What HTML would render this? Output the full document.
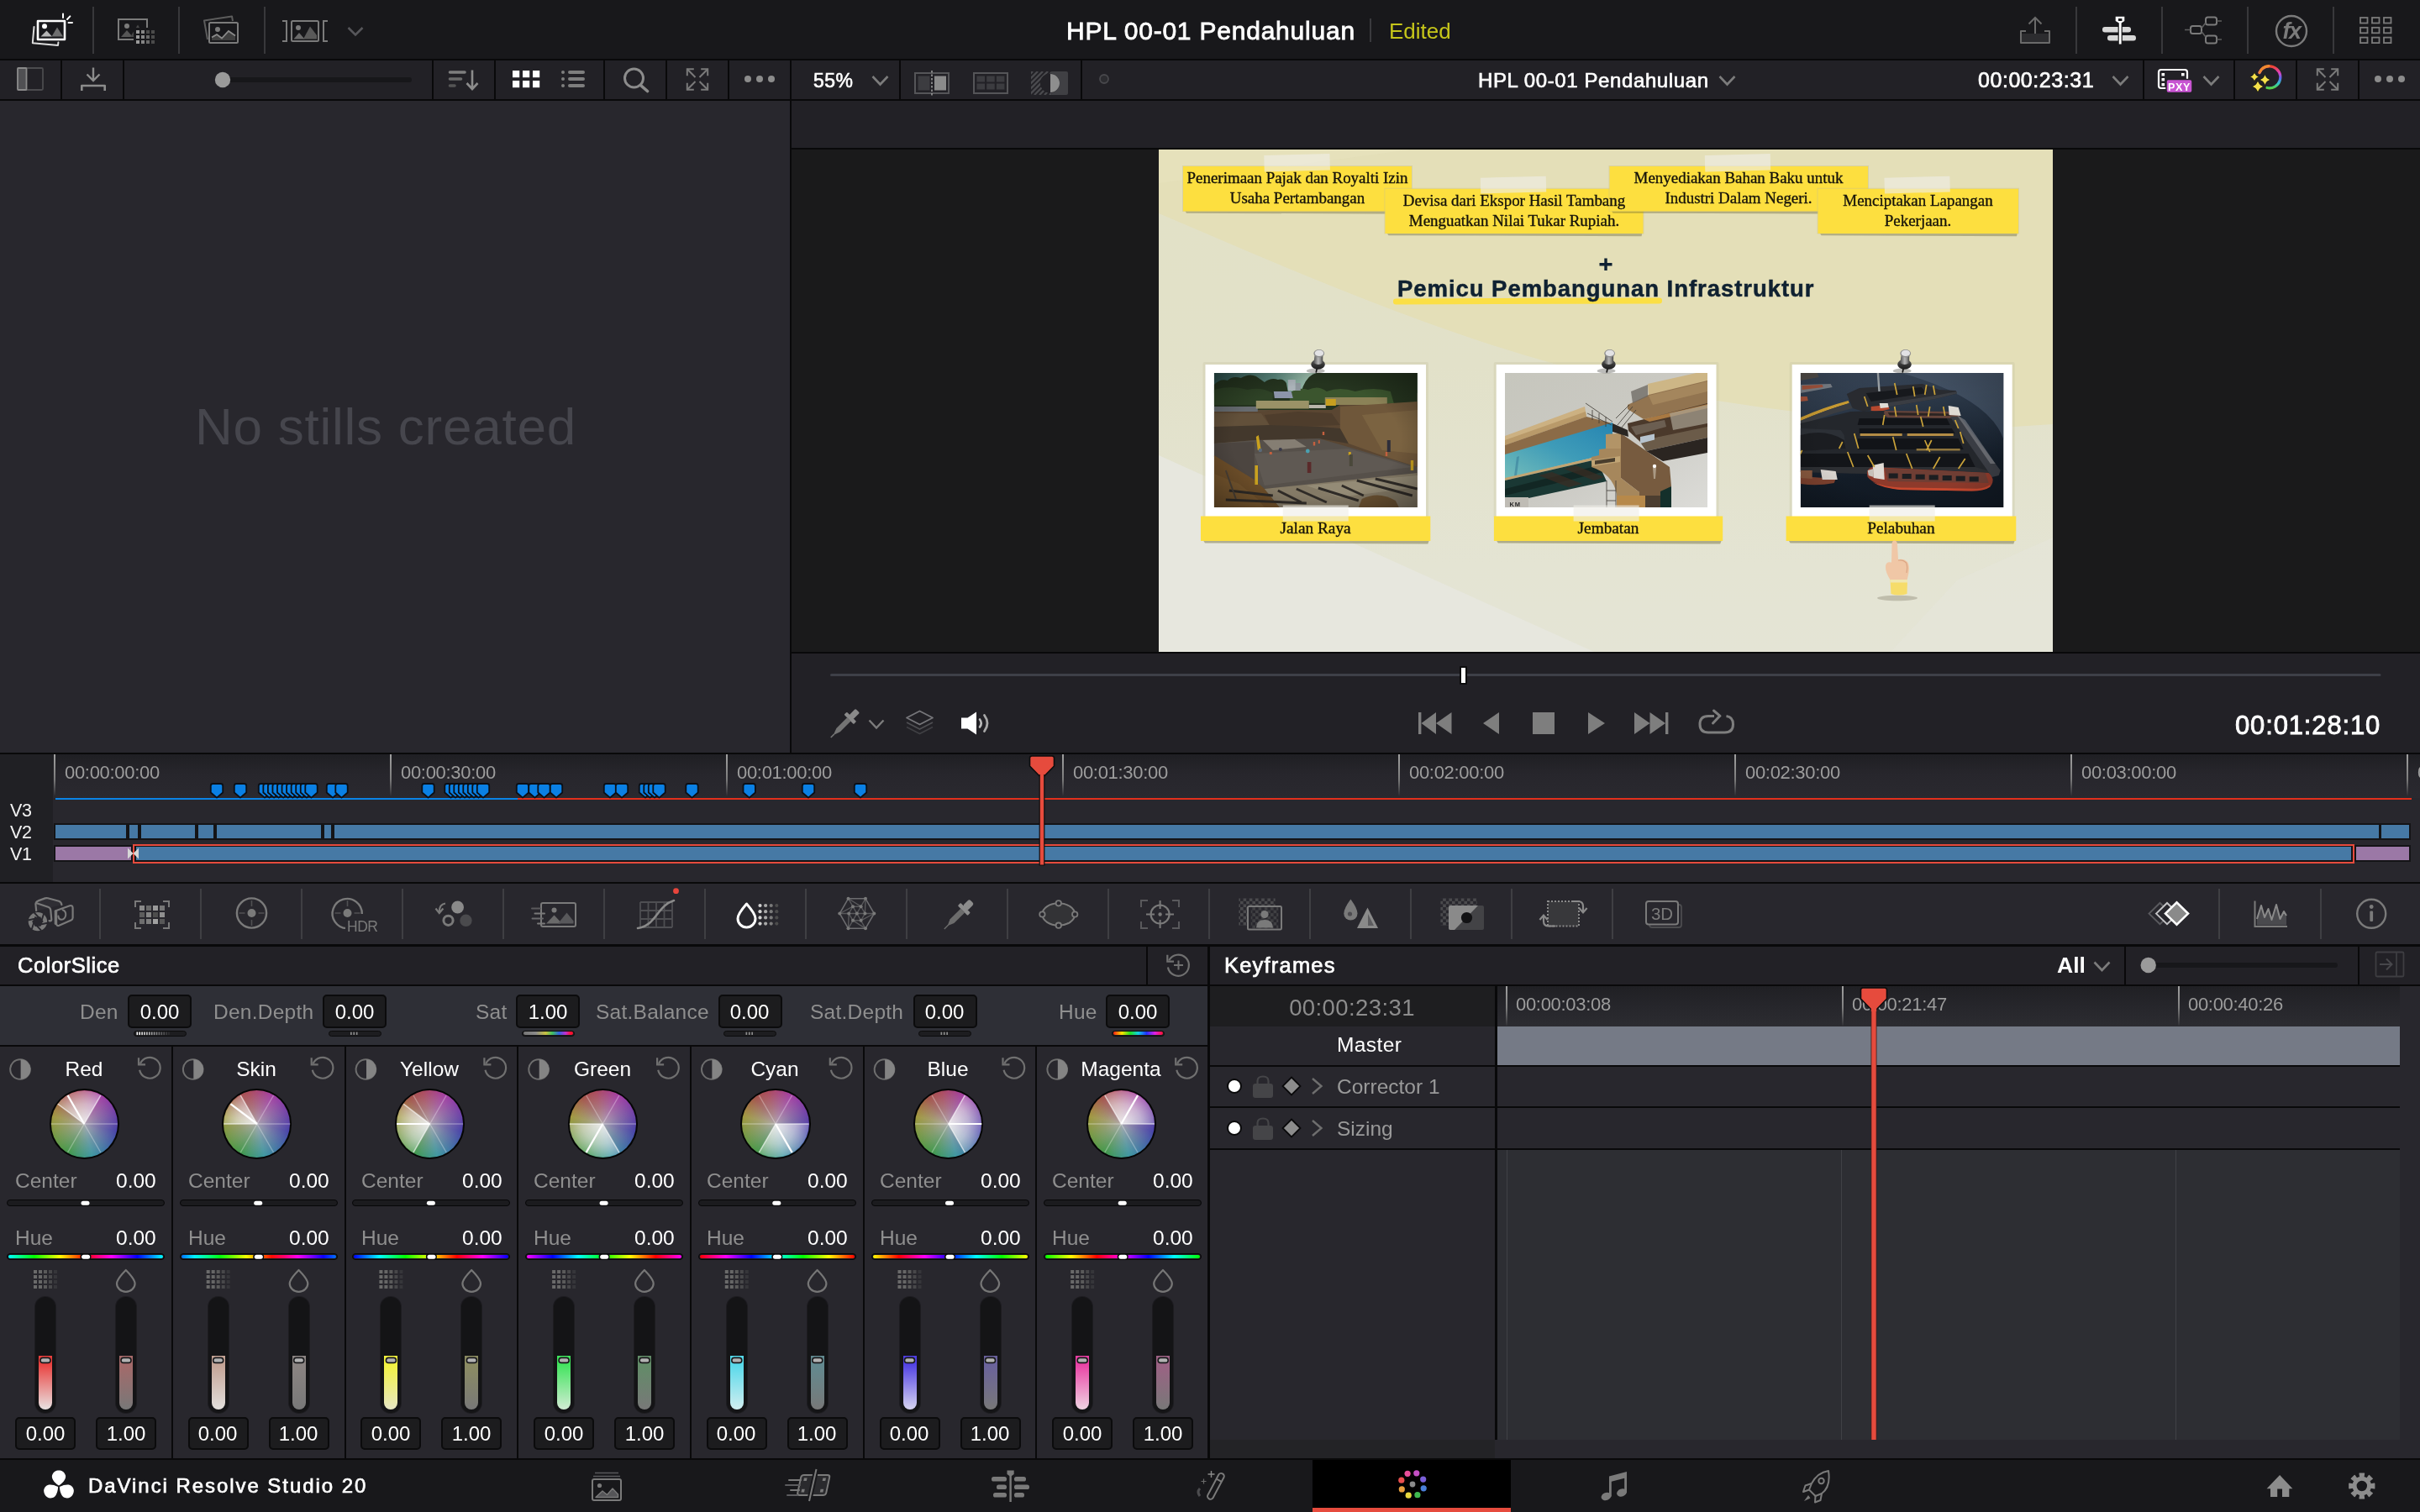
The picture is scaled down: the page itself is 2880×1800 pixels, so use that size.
<!DOCTYPE html>
<html lang="en"><head><meta charset="utf-8"><title>DaVinci Resolve - Color</title>
<style>
html,body{margin:0;padding:0;background:#28272d;}
html{overflow:hidden;width:2880px;height:1800px;}
body{width:2880px;height:1800px;position:relative;overflow:hidden;font-family:"Liberation Sans",sans-serif;}
body div{position:absolute;box-sizing:border-box;}
.t{white-space:nowrap;will-change:transform;}
svg.ov{position:absolute;left:0;top:0;width:2880px;height:1800px;}
</style></head>
<body>
<div style="left:0px;top:0px;width:2880px;height:70px;background:#18181b;"></div>
<div style="left:0px;top:70px;width:2880px;height:2px;background:#09090a;"></div>
<div style="left:110px;top:8px;width:2px;height:56px;background:#38383b;"></div>
<div style="left:212px;top:8px;width:2px;height:56px;background:#38383b;"></div>
<div style="left:314px;top:8px;width:2px;height:56px;background:#38383b;"></div>
<div style="left:2470px;top:8px;width:2px;height:56px;background:#38383b;"></div>
<div style="left:2572px;top:8px;width:2px;height:56px;background:#38383b;"></div>
<div style="left:2674px;top:8px;width:2px;height:56px;background:#38383b;"></div>
<div style="left:2776px;top:8px;width:2px;height:56px;background:#38383b;"></div>
<div class="t" style="top:19.10px;font-size:30px;line-height:36px;color:#fff;-webkit-text-stroke:0.81px #fff;left:1268.6px;letter-spacing:0.78px;">HPL 00-01 Pendahuluan</div>
<div style="left:1630px;top:22px;width:2px;height:28px;background:#3a3a3e;"></div>
<div class="t" style="top:21.99px;font-size:26px;line-height:31px;color:#c5c51a;left:1653px;">Edited</div>
<div style="left:0px;top:72px;width:2880px;height:46px;background:#222126;"></div>
<div style="left:0px;top:118px;width:2880px;height:2px;background:#09090a;"></div>
<div style="left:72px;top:72px;width:2px;height:46px;background:#09090a;"></div>
<div style="left:146px;top:72px;width:2px;height:46px;background:#09090a;"></div>
<div style="left:514px;top:72px;width:2px;height:46px;background:#09090a;"></div>
<div style="left:588px;top:72px;width:2px;height:46px;background:#09090a;"></div>
<div style="left:718px;top:72px;width:2px;height:46px;background:#09090a;"></div>
<div style="left:792px;top:72px;width:2px;height:46px;background:#09090a;"></div>
<div style="left:866px;top:72px;width:2px;height:46px;background:#09090a;"></div>
<div style="left:1070px;top:72px;width:2px;height:46px;background:#09090a;"></div>
<div style="left:1286px;top:72px;width:2px;height:46px;background:#09090a;"></div>
<div style="left:2550px;top:72px;width:2px;height:46px;background:#09090a;"></div>
<div style="left:2658px;top:72px;width:2px;height:46px;background:#09090a;"></div>
<div style="left:2732px;top:72px;width:2px;height:46px;background:#09090a;"></div>
<div style="left:2806px;top:72px;width:2px;height:46px;background:#09090a;"></div>
<div class="t" style="top:81.63px;font-size:23px;line-height:28px;color:#fff;-webkit-text-stroke:0.62px #fff;left:967.6px;letter-spacing:0.5px;">55%</div>
<div class="t" style="top:80.78px;font-size:24px;line-height:29px;color:#fff;-webkit-text-stroke:0.65px #fff;left:1759px;letter-spacing:0.6px;">HPL 00-01 Pendahuluan</div>
<div class="t" style="top:80.14px;font-size:25px;line-height:30px;color:#fff;-webkit-text-stroke:0.68px #fff;left:2353.5px;letter-spacing:0.55px;">00:00:23:31</div>
<div style="left:0px;top:120px;width:940px;height:776px;background:#28272d;"></div>
<div style="left:940px;top:72px;width:2px;height:824px;background:#09090a;"></div>
<div class="t" style="top:471.02px;font-size:62px;line-height:74px;color:#46464d;left:9.0px;width:900px;text-align:center;letter-spacing:0.75px;">No stills created</div>
<div style="left:942px;top:120px;width:1938px;height:56px;background:#222126;"></div>
<div style="left:942px;top:176px;width:1938px;height:2px;background:#09090a;"></div>
<div style="left:942px;top:178px;width:1938px;height:598px;background:#1a1a1b;"></div>
<div style="left:942px;top:776px;width:1938px;height:2px;background:#09090a;"></div>
<div style="left:942px;top:778px;width:1938px;height:118px;background:#222126;"></div>
<div style="left:0px;top:896px;width:2880px;height:2px;background:#09090a;"></div>
<div style="left:1379px;top:178px;width:1064px;height:598px;background:#e4dfb8;"></div>
<div style="left:1658px;top:355.4px;width:319.5px;height:6.6px;background:#fbdf45;border-radius:3.3px;transform:rotate(-0.18deg);"></div>
<div class="t" style="top:326.57px;font-size:27.5px;line-height:33px;color:#0f2131;font-weight:700;left:1662.5px;letter-spacing:0.95px;-webkit-text-stroke:0.5px #0f2131;">Pemicu Pembangunan Infrastruktur</div>
<div class="t" style="top:845.26px;font-size:31px;line-height:37px;color:#fff;-webkit-text-stroke:0.84px #fff;left:2660px;letter-spacing:0.85px;">00:01:28:10</div>
<div style="left:0px;top:898px;width:2880px;height:152px;background:#28272d;"></div>
<div style="left:0px;top:898px;width:63px;height:152px;background:#202024;"></div>
<div style="left:63px;top:898px;width:2817px;height:52px;background:linear-gradient(180deg,#1f1f23 0%,#27262c 45%,#2a292f 100%);"></div>
<div style="left:0px;top:1050px;width:2880px;height:2px;background:#09090a;"></div>
<div style="left:64px;top:898px;width:2px;height:50px;background:linear-gradient(180deg,#a0a0a0 0%,#7c7c7c 60%,rgba(90,90,90,0) 100%);"></div>
<div class="t" style="top:906.98px;font-size:22px;line-height:26px;color:#9c9c9c;left:76.5px;letter-spacing:-0.3px;">00:00:00:00</div>
<div style="left:464px;top:898px;width:2px;height:50px;background:linear-gradient(180deg,#a0a0a0 0%,#7c7c7c 60%,rgba(90,90,90,0) 100%);"></div>
<div class="t" style="top:906.98px;font-size:22px;line-height:26px;color:#9c9c9c;left:476.5px;letter-spacing:-0.3px;">00:00:30:00</div>
<div style="left:864px;top:898px;width:2px;height:50px;background:linear-gradient(180deg,#a0a0a0 0%,#7c7c7c 60%,rgba(90,90,90,0) 100%);"></div>
<div class="t" style="top:906.98px;font-size:22px;line-height:26px;color:#9c9c9c;left:876.5px;letter-spacing:-0.3px;">00:01:00:00</div>
<div style="left:1264px;top:898px;width:2px;height:50px;background:linear-gradient(180deg,#a0a0a0 0%,#7c7c7c 60%,rgba(90,90,90,0) 100%);"></div>
<div class="t" style="top:906.98px;font-size:22px;line-height:26px;color:#9c9c9c;left:1276.5px;letter-spacing:-0.3px;">00:01:30:00</div>
<div style="left:1664px;top:898px;width:2px;height:50px;background:linear-gradient(180deg,#a0a0a0 0%,#7c7c7c 60%,rgba(90,90,90,0) 100%);"></div>
<div class="t" style="top:906.98px;font-size:22px;line-height:26px;color:#9c9c9c;left:1676.5px;letter-spacing:-0.3px;">00:02:00:00</div>
<div style="left:2064px;top:898px;width:2px;height:50px;background:linear-gradient(180deg,#a0a0a0 0%,#7c7c7c 60%,rgba(90,90,90,0) 100%);"></div>
<div class="t" style="top:906.98px;font-size:22px;line-height:26px;color:#9c9c9c;left:2076.5px;letter-spacing:-0.3px;">00:02:30:00</div>
<div style="left:2464px;top:898px;width:2px;height:50px;background:linear-gradient(180deg,#a0a0a0 0%,#7c7c7c 60%,rgba(90,90,90,0) 100%);"></div>
<div class="t" style="top:906.98px;font-size:22px;line-height:26px;color:#9c9c9c;left:2476.5px;letter-spacing:-0.3px;">00:03:00:00</div>
<div style="left:2864px;top:898px;width:2px;height:50px;background:linear-gradient(180deg,#a0a0a0 0%,#7c7c7c 60%,rgba(90,90,90,0) 100%);"></div>
<div class="t" style="top:906.98px;font-size:22px;line-height:26px;color:#9c9c9c;left:2876.5px;letter-spacing:-0.3px;width:3.5px;overflow:hidden;">00:03:30:00</div>
<div style="left:66px;top:950px;width:550px;height:2.4px;background:#0a84e6;"></div>
<div style="left:616px;top:950px;width:2254px;height:2.4px;background:#e2301c;"></div>
<div class="t" style="top:951.55px;font-size:21.5px;line-height:26px;color:#f2f2f2;left:11.5px;letter-spacing:-0.4px;">V3</div>
<div class="t" style="top:977.55px;font-size:21.5px;line-height:26px;color:#f2f2f2;left:11.5px;letter-spacing:-0.4px;">V2</div>
<div class="t" style="top:1003.55px;font-size:21.5px;line-height:26px;color:#f2f2f2;left:11.5px;letter-spacing:-0.4px;">V1</div>
<div style="left:64px;top:980px;width:2805px;height:20px;background:#141416;"></div>
<div style="left:66px;top:982px;width:84px;height:16px;background:#4679a5;"></div>
<div style="left:154px;top:982px;width:10px;height:16px;background:#4679a5;"></div>
<div style="left:168px;top:982px;width:64px;height:16px;background:#4679a5;"></div>
<div style="left:236px;top:982px;width:18px;height:16px;background:#4679a5;"></div>
<div style="left:258px;top:982px;width:124px;height:16px;background:#4679a5;"></div>
<div style="left:386px;top:982px;width:8px;height:16px;background:#4679a5;"></div>
<div style="left:398px;top:982px;width:2432.5px;height:16px;background:#4679a5;"></div>
<div style="left:2834px;top:982px;width:33px;height:16px;background:#4679a5;"></div>
<div style="left:64px;top:1006px;width:2805px;height:20px;background:#141416;"></div>
<div style="left:66px;top:1008px;width:90px;height:16px;background:#9b78a6;"></div>
<div style="left:2804px;top:1008px;width:63px;height:16px;background:#9b78a6;"></div>
<div style="left:158px;top:1004.5px;width:2644px;height:23.5px;background:#141416;border:2.2px solid #e64b3d;"></div>
<div style="left:162px;top:1008px;width:2636px;height:16px;background:#4679a5;"></div>
<div style="left:0px;top:1052px;width:2880px;height:72px;background:#28272d;"></div>
<div style="left:0px;top:1124px;width:2880px;height:3px;background:#09090a;"></div>
<div style="left:118px;top:1058px;width:2px;height:60px;background:#3f3f43;"></div>
<div style="left:238px;top:1058px;width:2px;height:60px;background:#3f3f43;"></div>
<div style="left:358px;top:1058px;width:2px;height:60px;background:#3f3f43;"></div>
<div style="left:478px;top:1058px;width:2px;height:60px;background:#3f3f43;"></div>
<div style="left:598px;top:1058px;width:2px;height:60px;background:#3f3f43;"></div>
<div style="left:718px;top:1058px;width:2px;height:60px;background:#3f3f43;"></div>
<div style="left:838px;top:1058px;width:2px;height:60px;background:#3f3f43;"></div>
<div style="left:958px;top:1058px;width:2px;height:60px;background:#3f3f43;"></div>
<div style="left:1078px;top:1058px;width:2px;height:60px;background:#3f3f43;"></div>
<div style="left:1198px;top:1058px;width:2px;height:60px;background:#3f3f43;"></div>
<div style="left:1318px;top:1058px;width:2px;height:60px;background:#3f3f43;"></div>
<div style="left:1438px;top:1058px;width:2px;height:60px;background:#3f3f43;"></div>
<div style="left:1558px;top:1058px;width:2px;height:60px;background:#3f3f43;"></div>
<div style="left:1678px;top:1058px;width:2px;height:60px;background:#3f3f43;"></div>
<div style="left:1798px;top:1058px;width:2px;height:60px;background:#3f3f43;"></div>
<div style="left:1918px;top:1058px;width:2px;height:60px;background:#3f3f43;"></div>
<div style="left:2640px;top:1058px;width:2px;height:60px;background:#3f3f43;"></div>
<div style="left:2760.5px;top:1058px;width:2px;height:60px;background:#3f3f43;"></div>
<div style="left:0px;top:1127px;width:1437px;height:45px;background:#222126;"></div>
<div style="left:0px;top:1172px;width:1437px;height:2px;background:#09090a;"></div>
<div style="left:0px;top:1174px;width:1437px;height:70px;background:#2e2f36;"></div>
<div style="left:0px;top:1244px;width:1437px;height:2px;background:#09090a;"></div>
<div style="left:0px;top:1246px;width:1437px;height:490px;background:#28272d;"></div>
<div style="left:1437px;top:1127px;width:3px;height:609px;background:#09090a;"></div>
<div style="left:1364px;top:1127px;width:2px;height:45px;background:#09090a;"></div>
<div style="left:0px;top:1736px;width:2880px;height:2px;background:#09090a;"></div>
<div class="t" style="top:1134.46px;font-size:25.5px;line-height:31px;color:#fff;-webkit-text-stroke:0.69px #fff;left:21px;letter-spacing:0.55px;">ColorSlice</div>
<div class="t" style="top:1190.41px;font-size:24.5px;line-height:29px;color:#8f8f8f;right:2739px;text-align:right;letter-spacing:0.25px;">Den</div>
<div style="left:152px;top:1184px;width:76px;height:39.5px;background:#1c1c1e;border:2px solid #0b0b0c;border-radius:5px;"></div>
<div class="t" style="top:1189.57px;font-size:24px;line-height:29px;color:#fff;left:151.5px;width:76px;text-align:center;">0.00</div>
<div style="left:158.5px;top:1226.5px;width:63px;height:7.5px;background:#1d1d20;border:1.6px solid #0b0b0c;border-radius:4px;"></div>
<div class="t" style="top:1190.41px;font-size:24.5px;line-height:29px;color:#8f8f8f;right:2506.5px;text-align:right;letter-spacing:0.25px;">Den.Depth</div>
<div style="left:384px;top:1184px;width:76px;height:39.5px;background:#1c1c1e;border:2px solid #0b0b0c;border-radius:5px;"></div>
<div class="t" style="top:1189.57px;font-size:24px;line-height:29px;color:#fff;left:383.5px;width:76px;text-align:center;">0.00</div>
<div style="left:390.5px;top:1226.5px;width:63px;height:7.5px;background:#1d1d20;border:1.6px solid #0b0b0c;border-radius:4px;"></div>
<div class="t" style="top:1190.41px;font-size:24.5px;line-height:29px;color:#8f8f8f;right:2276px;text-align:right;letter-spacing:0.25px;">Sat</div>
<div style="left:614px;top:1184px;width:76px;height:39.5px;background:#1c1c1e;border:2px solid #0b0b0c;border-radius:5px;"></div>
<div class="t" style="top:1189.57px;font-size:24px;line-height:29px;color:#fff;left:613.5px;width:76px;text-align:center;">1.00</div>
<div style="left:620.5px;top:1226.5px;width:63px;height:7.5px;background:#1d1d20;border:1.6px solid #0b0b0c;border-radius:4px;"></div>
<div style="left:622.5px;top:1228.3px;width:59px;height:4px;background:linear-gradient(90deg,#777 0%,#8a8a8a 25%,#c8c040 45%,#40c060 58%,#3060e0 72%,#c030d0 85%,#ff1030 95%);border-radius:2px;"></div>
<div class="t" style="top:1190.41px;font-size:24.5px;line-height:29px;color:#8f8f8f;right:2036.5px;text-align:right;letter-spacing:0.25px;">Sat.Balance</div>
<div style="left:854.5px;top:1184px;width:76px;height:39.5px;background:#1c1c1e;border:2px solid #0b0b0c;border-radius:5px;"></div>
<div class="t" style="top:1189.57px;font-size:24px;line-height:29px;color:#fff;left:854.0px;width:76px;text-align:center;">0.00</div>
<div style="left:861.0px;top:1226.5px;width:63px;height:7.5px;background:#1d1d20;border:1.6px solid #0b0b0c;border-radius:4px;"></div>
<div class="t" style="top:1190.41px;font-size:24.5px;line-height:29px;color:#8f8f8f;right:1804.5px;text-align:right;letter-spacing:0.25px;">Sat.Depth</div>
<div style="left:1086.5px;top:1184px;width:76px;height:39.5px;background:#1c1c1e;border:2px solid #0b0b0c;border-radius:5px;"></div>
<div class="t" style="top:1189.57px;font-size:24px;line-height:29px;color:#fff;left:1086.0px;width:76px;text-align:center;">0.00</div>
<div style="left:1093.0px;top:1226.5px;width:63px;height:7.5px;background:#1d1d20;border:1.6px solid #0b0b0c;border-radius:4px;"></div>
<div class="t" style="top:1190.41px;font-size:24.5px;line-height:29px;color:#8f8f8f;right:1574.5px;text-align:right;letter-spacing:0.25px;">Hue</div>
<div style="left:1316px;top:1184px;width:76px;height:39.5px;background:#1c1c1e;border:2px solid #0b0b0c;border-radius:5px;"></div>
<div class="t" style="top:1189.57px;font-size:24px;line-height:29px;color:#fff;left:1315.5px;width:76px;text-align:center;">0.00</div>
<div style="left:1322.5px;top:1226.5px;width:63px;height:7.5px;background:#1d1d20;border:1.6px solid #0b0b0c;border-radius:4px;"></div>
<div style="left:1324.5px;top:1228.3px;width:59px;height:4px;background:linear-gradient(90deg,#ff2010 0%,#ffe000 17%,#20e020 34%,#10d0e0 50%,#2030ff 67%,#e020e0 84%,#ff1030 100%);border-radius:2px;"></div>
<div class="t" style="top:1257.61px;font-size:24.5px;line-height:29px;color:#fff;left:9.5px;width:180px;text-align:center;">Red</div>
<div style="left:58.6px;top:1296.4px;width:83.2px;height:83.2px;background:#050505;border-radius:50%;"></div>
<div style="left:60.6px;top:1298.4px;width:79.2px;height:79.2px;background:radial-gradient(circle,rgba(176,172,176,0.92) 0%,rgba(165,162,165,0.55) 35%,rgba(140,140,140,0.14) 75%,rgba(120,120,120,0) 100%),conic-gradient(from 347deg,#b23a50 0deg,#a82aa8 42deg,#3530ae 116deg,#2a98a6 179deg,#2f9a3a 222deg,#a49a2a 296deg,#a8483a 335deg,#b23a50 360deg);border-radius:50%;"></div>
<div class="t" style="top:1391.01px;font-size:24.5px;line-height:29px;color:#8f8f8f;left:18.2px;">Center</div>
<div class="t" style="top:1391.01px;font-size:24.5px;line-height:29px;color:#fff;right:2694.2px;text-align:right;">0.00</div>
<div style="left:8.0px;top:1428px;width:188px;height:8.4px;background:#1b1b1e;border:1.8px solid #060607;border-radius:5px;"></div>
<div class="t" style="top:1459.01px;font-size:24.5px;line-height:29px;color:#8f8f8f;left:18.2px;">Hue</div>
<div class="t" style="top:1459.01px;font-size:24.5px;line-height:29px;color:#fff;right:2694.2px;text-align:right;">0.00</div>
<div style="left:8.0px;top:1492px;width:188px;height:8.4px;background:#1b1b1e;border:1.8px solid #060607;border-radius:5px;"></div>
<div style="left:10.0px;top:1494px;width:184px;height:4.4px;background:linear-gradient(90deg,hsl(180,100%,50%) 0.0%,hsl(150,100%,50%) 8.3%,hsl(120,100%,50%) 16.7%,hsl(90,100%,50%) 25.0%,hsl(60,100%,50%) 33.3%,hsl(30,100%,50%) 41.7%,hsl(0,100%,50%) 50.0%,hsl(330,100%,50%) 58.3%,hsl(300,100%,50%) 66.7%,hsl(270,100%,50%) 75.0%,hsl(240,100%,50%) 83.3%,hsl(210,100%,50%) 91.7%,hsl(180,100%,50%) 100.0%);border-radius:3px;"></div>
<div style="left:42.0px;top:1543.5px;width:24px;height:138px;background:#141416;border-radius:12px;box-shadow:0 0 0 1px rgba(20,20,22,0.55);"></div>
<div style="left:46.0px;top:1614px;width:16px;height:64.4px;background:linear-gradient(180deg,#e93f3d 0%,#e93f3d 14%,#e9e2e2 100%);border-radius:0 0 8px 8px;"></div>
<div style="left:18.0px;top:1686.5px;width:72px;height:39px;background:#1c1c1e;border:2px solid #0b0b0c;border-radius:5px;"></div>
<div class="t" style="top:1691.82px;font-size:24px;line-height:29px;color:#fff;left:17.5px;width:72px;text-align:center;">0.00</div>
<div style="left:138.0px;top:1543.5px;width:24px;height:138px;background:#141416;border-radius:12px;box-shadow:0 0 0 1px rgba(20,20,22,0.55);"></div>
<div style="left:142.0px;top:1614px;width:16px;height:64.4px;background:linear-gradient(180deg,#a56a6a 0%,#a56a6a 14%,#787878 100%);border-radius:0 0 8px 8px;"></div>
<div style="left:114.0px;top:1686.5px;width:72px;height:39px;background:#1c1c1e;border:2px solid #0b0b0c;border-radius:5px;"></div>
<div class="t" style="top:1691.82px;font-size:24px;line-height:29px;color:#fff;left:113.5px;width:72px;text-align:center;">1.00</div>
<div style="left:204px;top:1246px;width:2px;height:490px;background:#09090a;"></div>
<div class="t" style="top:1257.61px;font-size:24.5px;line-height:29px;color:#fff;left:215.2px;width:180px;text-align:center;">Skin</div>
<div style="left:264.3px;top:1296.4px;width:83.2px;height:83.2px;background:#050505;border-radius:50%;"></div>
<div style="left:266.3px;top:1298.4px;width:79.2px;height:79.2px;background:radial-gradient(circle,rgba(176,172,176,0.92) 0%,rgba(165,162,165,0.55) 35%,rgba(140,140,140,0.14) 75%,rgba(120,120,120,0) 100%),conic-gradient(from 347deg,#b23a50 0deg,#a82aa8 42deg,#3530ae 116deg,#2a98a6 179deg,#2f9a3a 222deg,#a49a2a 296deg,#a8483a 335deg,#b23a50 360deg);border-radius:50%;"></div>
<div class="t" style="top:1391.01px;font-size:24.5px;line-height:29px;color:#8f8f8f;left:223.89999999999998px;">Center</div>
<div class="t" style="top:1391.01px;font-size:24.5px;line-height:29px;color:#fff;right:2488.5px;text-align:right;">0.00</div>
<div style="left:213.7px;top:1428px;width:188px;height:8.4px;background:#1b1b1e;border:1.8px solid #060607;border-radius:5px;"></div>
<div class="t" style="top:1459.01px;font-size:24.5px;line-height:29px;color:#8f8f8f;left:223.89999999999998px;">Hue</div>
<div class="t" style="top:1459.01px;font-size:24.5px;line-height:29px;color:#fff;right:2488.5px;text-align:right;">0.00</div>
<div style="left:213.7px;top:1492px;width:188px;height:8.4px;background:#1b1b1e;border:1.8px solid #060607;border-radius:5px;"></div>
<div style="left:215.7px;top:1494px;width:184px;height:4.4px;background:linear-gradient(90deg,hsl(213,100%,50%) 0.0%,hsl(183,100%,50%) 8.3%,hsl(153,100%,50%) 16.7%,hsl(123,100%,50%) 25.0%,hsl(93,100%,50%) 33.3%,hsl(63,100%,50%) 41.7%,hsl(33,100%,50%) 50.0%,hsl(3,100%,50%) 58.3%,hsl(333,100%,50%) 66.7%,hsl(303,100%,50%) 75.0%,hsl(273,100%,50%) 83.3%,hsl(243,100%,50%) 91.7%,hsl(213,100%,50%) 100.0%);border-radius:3px;"></div>
<div style="left:247.7px;top:1543.5px;width:24px;height:138px;background:#141416;border-radius:12px;box-shadow:0 0 0 1px rgba(20,20,22,0.55);"></div>
<div style="left:251.7px;top:1614px;width:16px;height:64.4px;background:linear-gradient(180deg,#c3a294 0%,#c3a294 14%,#e2dfdc 100%);border-radius:0 0 8px 8px;"></div>
<div style="left:223.7px;top:1686.5px;width:72px;height:39px;background:#1c1c1e;border:2px solid #0b0b0c;border-radius:5px;"></div>
<div class="t" style="top:1691.82px;font-size:24px;line-height:29px;color:#fff;left:223.2px;width:72px;text-align:center;">0.00</div>
<div style="left:343.7px;top:1543.5px;width:24px;height:138px;background:#141416;border-radius:12px;box-shadow:0 0 0 1px rgba(20,20,22,0.55);"></div>
<div style="left:347.7px;top:1614px;width:16px;height:64.4px;background:linear-gradient(180deg,#8b8482 0%,#8b8482 14%,#787878 100%);border-radius:0 0 8px 8px;"></div>
<div style="left:319.7px;top:1686.5px;width:72px;height:39px;background:#1c1c1e;border:2px solid #0b0b0c;border-radius:5px;"></div>
<div class="t" style="top:1691.82px;font-size:24px;line-height:29px;color:#fff;left:319.2px;width:72px;text-align:center;">1.00</div>
<div style="left:410px;top:1246px;width:2px;height:490px;background:#09090a;"></div>
<div class="t" style="top:1257.61px;font-size:24.5px;line-height:29px;color:#fff;left:420.9px;width:180px;text-align:center;">Yellow</div>
<div style="left:470.0px;top:1296.4px;width:83.2px;height:83.2px;background:#050505;border-radius:50%;"></div>
<div style="left:472.0px;top:1298.4px;width:79.2px;height:79.2px;background:radial-gradient(circle,rgba(176,172,176,0.92) 0%,rgba(165,162,165,0.55) 35%,rgba(140,140,140,0.14) 75%,rgba(120,120,120,0) 100%),conic-gradient(from 347deg,#b23a50 0deg,#a82aa8 42deg,#3530ae 116deg,#2a98a6 179deg,#2f9a3a 222deg,#a49a2a 296deg,#a8483a 335deg,#b23a50 360deg);border-radius:50%;"></div>
<div class="t" style="top:1391.01px;font-size:24.5px;line-height:29px;color:#8f8f8f;left:429.59999999999997px;">Center</div>
<div class="t" style="top:1391.01px;font-size:24.5px;line-height:29px;color:#fff;right:2282.8px;text-align:right;">0.00</div>
<div style="left:419.4px;top:1428px;width:188px;height:8.4px;background:#1b1b1e;border:1.8px solid #060607;border-radius:5px;"></div>
<div class="t" style="top:1459.01px;font-size:24.5px;line-height:29px;color:#8f8f8f;left:429.59999999999997px;">Hue</div>
<div class="t" style="top:1459.01px;font-size:24.5px;line-height:29px;color:#fff;right:2282.8px;text-align:right;">0.00</div>
<div style="left:419.4px;top:1492px;width:188px;height:8.4px;background:#1b1b1e;border:1.8px solid #060607;border-radius:5px;"></div>
<div style="left:421.4px;top:1494px;width:184px;height:4.4px;background:linear-gradient(90deg,hsl(240,100%,50%) 0.0%,hsl(210,100%,50%) 8.3%,hsl(180,100%,50%) 16.7%,hsl(150,100%,50%) 25.0%,hsl(120,100%,50%) 33.3%,hsl(90,100%,50%) 41.7%,hsl(60,100%,50%) 50.0%,hsl(30,100%,50%) 58.3%,hsl(0,100%,50%) 66.7%,hsl(330,100%,50%) 75.0%,hsl(300,100%,50%) 83.3%,hsl(270,100%,50%) 91.7%,hsl(240,100%,50%) 100.0%);border-radius:3px;"></div>
<div style="left:453.4px;top:1543.5px;width:24px;height:138px;background:#141416;border-radius:12px;box-shadow:0 0 0 1px rgba(20,20,22,0.55);"></div>
<div style="left:457.4px;top:1614px;width:16px;height:64.4px;background:linear-gradient(180deg,#f2f23e 0%,#f2f23e 14%,#e6e6c4 100%);border-radius:0 0 8px 8px;"></div>
<div style="left:429.4px;top:1686.5px;width:72px;height:39px;background:#1c1c1e;border:2px solid #0b0b0c;border-radius:5px;"></div>
<div class="t" style="top:1691.82px;font-size:24px;line-height:29px;color:#fff;left:428.9px;width:72px;text-align:center;">0.00</div>
<div style="left:549.4px;top:1543.5px;width:24px;height:138px;background:#141416;border-radius:12px;box-shadow:0 0 0 1px rgba(20,20,22,0.55);"></div>
<div style="left:553.4px;top:1614px;width:16px;height:64.4px;background:linear-gradient(180deg,#8c8c62 0%,#8c8c62 14%,#787878 100%);border-radius:0 0 8px 8px;"></div>
<div style="left:525.4px;top:1686.5px;width:72px;height:39px;background:#1c1c1e;border:2px solid #0b0b0c;border-radius:5px;"></div>
<div class="t" style="top:1691.82px;font-size:24px;line-height:29px;color:#fff;left:524.9px;width:72px;text-align:center;">1.00</div>
<div style="left:615px;top:1246px;width:2px;height:490px;background:#09090a;"></div>
<div class="t" style="top:1257.61px;font-size:24.5px;line-height:29px;color:#fff;left:626.5999999999999px;width:180px;text-align:center;">Green</div>
<div style="left:675.7px;top:1296.4px;width:83.2px;height:83.2px;background:#050505;border-radius:50%;"></div>
<div style="left:677.7px;top:1298.4px;width:79.2px;height:79.2px;background:radial-gradient(circle,rgba(176,172,176,0.92) 0%,rgba(165,162,165,0.55) 35%,rgba(140,140,140,0.14) 75%,rgba(120,120,120,0) 100%),conic-gradient(from 347deg,#b23a50 0deg,#a82aa8 42deg,#3530ae 116deg,#2a98a6 179deg,#2f9a3a 222deg,#a49a2a 296deg,#a8483a 335deg,#b23a50 360deg);border-radius:50%;"></div>
<div class="t" style="top:1391.01px;font-size:24.5px;line-height:29px;color:#8f8f8f;left:635.3px;">Center</div>
<div class="t" style="top:1391.01px;font-size:24.5px;line-height:29px;color:#fff;right:2077.1000000000004px;text-align:right;">0.00</div>
<div style="left:625.1px;top:1428px;width:188px;height:8.4px;background:#1b1b1e;border:1.8px solid #060607;border-radius:5px;"></div>
<div class="t" style="top:1459.01px;font-size:24.5px;line-height:29px;color:#8f8f8f;left:635.3px;">Hue</div>
<div class="t" style="top:1459.01px;font-size:24.5px;line-height:29px;color:#fff;right:2077.1000000000004px;text-align:right;">0.00</div>
<div style="left:625.1px;top:1492px;width:188px;height:8.4px;background:#1b1b1e;border:1.8px solid #060607;border-radius:5px;"></div>
<div style="left:627.1px;top:1494px;width:184px;height:4.4px;background:linear-gradient(90deg,hsl(300,100%,50%) 0.0%,hsl(270,100%,50%) 8.3%,hsl(240,100%,50%) 16.7%,hsl(210,100%,50%) 25.0%,hsl(180,100%,50%) 33.3%,hsl(150,100%,50%) 41.7%,hsl(120,100%,50%) 50.0%,hsl(90,100%,50%) 58.3%,hsl(60,100%,50%) 66.7%,hsl(30,100%,50%) 75.0%,hsl(0,100%,50%) 83.3%,hsl(330,100%,50%) 91.7%,hsl(300,100%,50%) 100.0%);border-radius:3px;"></div>
<div style="left:659.1px;top:1543.5px;width:24px;height:138px;background:#141416;border-radius:12px;box-shadow:0 0 0 1px rgba(20,20,22,0.55);"></div>
<div style="left:663.1px;top:1614px;width:16px;height:64.4px;background:linear-gradient(180deg,#3fe45c 0%,#3fe45c 14%,#d2ecd4 100%);border-radius:0 0 8px 8px;"></div>
<div style="left:635.1px;top:1686.5px;width:72px;height:39px;background:#1c1c1e;border:2px solid #0b0b0c;border-radius:5px;"></div>
<div class="t" style="top:1691.82px;font-size:24px;line-height:29px;color:#fff;left:634.6px;width:72px;text-align:center;">0.00</div>
<div style="left:755.1px;top:1543.5px;width:24px;height:138px;background:#141416;border-radius:12px;box-shadow:0 0 0 1px rgba(20,20,22,0.55);"></div>
<div style="left:759.1px;top:1614px;width:16px;height:64.4px;background:linear-gradient(180deg,#628c68 0%,#628c68 14%,#787878 100%);border-radius:0 0 8px 8px;"></div>
<div style="left:731.1px;top:1686.5px;width:72px;height:39px;background:#1c1c1e;border:2px solid #0b0b0c;border-radius:5px;"></div>
<div class="t" style="top:1691.82px;font-size:24px;line-height:29px;color:#fff;left:730.6px;width:72px;text-align:center;">1.00</div>
<div style="left:821px;top:1246px;width:2px;height:490px;background:#09090a;"></div>
<div class="t" style="top:1257.61px;font-size:24.5px;line-height:29px;color:#fff;left:832.3px;width:180px;text-align:center;">Cyan</div>
<div style="left:881.4px;top:1296.4px;width:83.2px;height:83.2px;background:#050505;border-radius:50%;"></div>
<div style="left:883.4px;top:1298.4px;width:79.2px;height:79.2px;background:radial-gradient(circle,rgba(176,172,176,0.92) 0%,rgba(165,162,165,0.55) 35%,rgba(140,140,140,0.14) 75%,rgba(120,120,120,0) 100%),conic-gradient(from 347deg,#b23a50 0deg,#a82aa8 42deg,#3530ae 116deg,#2a98a6 179deg,#2f9a3a 222deg,#a49a2a 296deg,#a8483a 335deg,#b23a50 360deg);border-radius:50%;"></div>
<div class="t" style="top:1391.01px;font-size:24.5px;line-height:29px;color:#8f8f8f;left:841.0px;">Center</div>
<div class="t" style="top:1391.01px;font-size:24.5px;line-height:29px;color:#fff;right:1871.4px;text-align:right;">0.00</div>
<div style="left:830.8px;top:1428px;width:188px;height:8.4px;background:#1b1b1e;border:1.8px solid #060607;border-radius:5px;"></div>
<div class="t" style="top:1459.01px;font-size:24.5px;line-height:29px;color:#8f8f8f;left:841.0px;">Hue</div>
<div class="t" style="top:1459.01px;font-size:24.5px;line-height:29px;color:#fff;right:1871.4px;text-align:right;">0.00</div>
<div style="left:830.8px;top:1492px;width:188px;height:8.4px;background:#1b1b1e;border:1.8px solid #060607;border-radius:5px;"></div>
<div style="left:832.8px;top:1494px;width:184px;height:4.4px;background:linear-gradient(90deg,hsl(0,100%,50%) 0.0%,hsl(330,100%,50%) 8.3%,hsl(300,100%,50%) 16.7%,hsl(270,100%,50%) 25.0%,hsl(240,100%,50%) 33.3%,hsl(210,100%,50%) 41.7%,hsl(180,100%,50%) 50.0%,hsl(150,100%,50%) 58.3%,hsl(120,100%,50%) 66.7%,hsl(90,100%,50%) 75.0%,hsl(60,100%,50%) 83.3%,hsl(30,100%,50%) 91.7%,hsl(0,100%,50%) 100.0%);border-radius:3px;"></div>
<div style="left:864.8px;top:1543.5px;width:24px;height:138px;background:#141416;border-radius:12px;box-shadow:0 0 0 1px rgba(20,20,22,0.55);"></div>
<div style="left:868.8px;top:1614px;width:16px;height:64.4px;background:linear-gradient(180deg,#55d9ea 0%,#55d9ea 14%,#d2eef0 100%);border-radius:0 0 8px 8px;"></div>
<div style="left:840.8px;top:1686.5px;width:72px;height:39px;background:#1c1c1e;border:2px solid #0b0b0c;border-radius:5px;"></div>
<div class="t" style="top:1691.82px;font-size:24px;line-height:29px;color:#fff;left:840.3px;width:72px;text-align:center;">0.00</div>
<div style="left:960.8px;top:1543.5px;width:24px;height:138px;background:#141416;border-radius:12px;box-shadow:0 0 0 1px rgba(20,20,22,0.55);"></div>
<div style="left:964.8px;top:1614px;width:16px;height:64.4px;background:linear-gradient(180deg,#628a90 0%,#628a90 14%,#787878 100%);border-radius:0 0 8px 8px;"></div>
<div style="left:936.8px;top:1686.5px;width:72px;height:39px;background:#1c1c1e;border:2px solid #0b0b0c;border-radius:5px;"></div>
<div class="t" style="top:1691.82px;font-size:24px;line-height:29px;color:#fff;left:936.3px;width:72px;text-align:center;">1.00</div>
<div style="left:1027px;top:1246px;width:2px;height:490px;background:#09090a;"></div>
<div class="t" style="top:1257.61px;font-size:24.5px;line-height:29px;color:#fff;left:1038.0px;width:180px;text-align:center;">Blue</div>
<div style="left:1087.1px;top:1296.4px;width:83.2px;height:83.2px;background:#050505;border-radius:50%;"></div>
<div style="left:1089.1px;top:1298.4px;width:79.2px;height:79.2px;background:radial-gradient(circle,rgba(176,172,176,0.92) 0%,rgba(165,162,165,0.55) 35%,rgba(140,140,140,0.14) 75%,rgba(120,120,120,0) 100%),conic-gradient(from 347deg,#b23a50 0deg,#a82aa8 42deg,#3530ae 116deg,#2a98a6 179deg,#2f9a3a 222deg,#a49a2a 296deg,#a8483a 335deg,#b23a50 360deg);border-radius:50%;"></div>
<div class="t" style="top:1391.01px;font-size:24.5px;line-height:29px;color:#8f8f8f;left:1046.7px;">Center</div>
<div class="t" style="top:1391.01px;font-size:24.5px;line-height:29px;color:#fff;right:1665.7px;text-align:right;">0.00</div>
<div style="left:1036.5px;top:1428px;width:188px;height:8.4px;background:#1b1b1e;border:1.8px solid #060607;border-radius:5px;"></div>
<div class="t" style="top:1459.01px;font-size:24.5px;line-height:29px;color:#8f8f8f;left:1046.7px;">Hue</div>
<div class="t" style="top:1459.01px;font-size:24.5px;line-height:29px;color:#fff;right:1665.7px;text-align:right;">0.00</div>
<div style="left:1036.5px;top:1492px;width:188px;height:8.4px;background:#1b1b1e;border:1.8px solid #060607;border-radius:5px;"></div>
<div style="left:1038.5px;top:1494px;width:184px;height:4.4px;background:linear-gradient(90deg,hsl(60,100%,50%) 0.0%,hsl(30,100%,50%) 8.3%,hsl(0,100%,50%) 16.7%,hsl(330,100%,50%) 25.0%,hsl(300,100%,50%) 33.3%,hsl(270,100%,50%) 41.7%,hsl(240,100%,50%) 50.0%,hsl(210,100%,50%) 58.3%,hsl(180,100%,50%) 66.7%,hsl(150,100%,50%) 75.0%,hsl(120,100%,50%) 83.3%,hsl(90,100%,50%) 91.7%,hsl(60,100%,50%) 100.0%);border-radius:3px;"></div>
<div style="left:1070.5px;top:1543.5px;width:24px;height:138px;background:#141416;border-radius:12px;box-shadow:0 0 0 1px rgba(20,20,22,0.55);"></div>
<div style="left:1074.5px;top:1614px;width:16px;height:64.4px;background:linear-gradient(180deg,#4f3fe2 0%,#4f3fe2 14%,#d6d4f0 100%);border-radius:0 0 8px 8px;"></div>
<div style="left:1046.5px;top:1686.5px;width:72px;height:39px;background:#1c1c1e;border:2px solid #0b0b0c;border-radius:5px;"></div>
<div class="t" style="top:1691.82px;font-size:24px;line-height:29px;color:#fff;left:1046.0px;width:72px;text-align:center;">0.00</div>
<div style="left:1166.5px;top:1543.5px;width:24px;height:138px;background:#141416;border-radius:12px;box-shadow:0 0 0 1px rgba(20,20,22,0.55);"></div>
<div style="left:1170.5px;top:1614px;width:16px;height:64.4px;background:linear-gradient(180deg,#6a629c 0%,#6a629c 14%,#787878 100%);border-radius:0 0 8px 8px;"></div>
<div style="left:1142.5px;top:1686.5px;width:72px;height:39px;background:#1c1c1e;border:2px solid #0b0b0c;border-radius:5px;"></div>
<div class="t" style="top:1691.82px;font-size:24px;line-height:29px;color:#fff;left:1142.0px;width:72px;text-align:center;">1.00</div>
<div style="left:1232px;top:1246px;width:2px;height:490px;background:#09090a;"></div>
<div class="t" style="top:1257.61px;font-size:24.5px;line-height:29px;color:#fff;left:1243.6999999999998px;width:180px;text-align:center;">Magenta</div>
<div style="left:1292.8px;top:1296.4px;width:83.2px;height:83.2px;background:#050505;border-radius:50%;"></div>
<div style="left:1294.8px;top:1298.4px;width:79.2px;height:79.2px;background:radial-gradient(circle,rgba(176,172,176,0.92) 0%,rgba(165,162,165,0.55) 35%,rgba(140,140,140,0.14) 75%,rgba(120,120,120,0) 100%),conic-gradient(from 347deg,#b23a50 0deg,#a82aa8 42deg,#3530ae 116deg,#2a98a6 179deg,#2f9a3a 222deg,#a49a2a 296deg,#a8483a 335deg,#b23a50 360deg);border-radius:50%;"></div>
<div class="t" style="top:1391.01px;font-size:24.5px;line-height:29px;color:#8f8f8f;left:1252.3999999999999px;">Center</div>
<div class="t" style="top:1391.01px;font-size:24.5px;line-height:29px;color:#fff;right:1460.0000000000002px;text-align:right;">0.00</div>
<div style="left:1242.2px;top:1428px;width:188px;height:8.4px;background:#1b1b1e;border:1.8px solid #060607;border-radius:5px;"></div>
<div class="t" style="top:1459.01px;font-size:24.5px;line-height:29px;color:#8f8f8f;left:1252.3999999999999px;">Hue</div>
<div class="t" style="top:1459.01px;font-size:24.5px;line-height:29px;color:#fff;right:1460.0000000000002px;text-align:right;">0.00</div>
<div style="left:1242.2px;top:1492px;width:188px;height:8.4px;background:#1b1b1e;border:1.8px solid #060607;border-radius:5px;"></div>
<div style="left:1244.2px;top:1494px;width:184px;height:4.4px;background:linear-gradient(90deg,hsl(120,100%,50%) 0.0%,hsl(90,100%,50%) 8.3%,hsl(60,100%,50%) 16.7%,hsl(30,100%,50%) 25.0%,hsl(0,100%,50%) 33.3%,hsl(330,100%,50%) 41.7%,hsl(300,100%,50%) 50.0%,hsl(270,100%,50%) 58.3%,hsl(240,100%,50%) 66.7%,hsl(210,100%,50%) 75.0%,hsl(180,100%,50%) 83.3%,hsl(150,100%,50%) 91.7%,hsl(120,100%,50%) 100.0%);border-radius:3px;"></div>
<div style="left:1276.2px;top:1543.5px;width:24px;height:138px;background:#141416;border-radius:12px;box-shadow:0 0 0 1px rgba(20,20,22,0.55);"></div>
<div style="left:1280.2px;top:1614px;width:16px;height:64.4px;background:linear-gradient(180deg,#e93fa4 0%,#e93fa4 14%,#f0d4e2 100%);border-radius:0 0 8px 8px;"></div>
<div style="left:1252.2px;top:1686.5px;width:72px;height:39px;background:#1c1c1e;border:2px solid #0b0b0c;border-radius:5px;"></div>
<div class="t" style="top:1691.82px;font-size:24px;line-height:29px;color:#fff;left:1251.7px;width:72px;text-align:center;">0.00</div>
<div style="left:1372.2px;top:1543.5px;width:24px;height:138px;background:#141416;border-radius:12px;box-shadow:0 0 0 1px rgba(20,20,22,0.55);"></div>
<div style="left:1376.2px;top:1614px;width:16px;height:64.4px;background:linear-gradient(180deg,#9c6284 0%,#9c6284 14%,#787878 100%);border-radius:0 0 8px 8px;"></div>
<div style="left:1348.2px;top:1686.5px;width:72px;height:39px;background:#1c1c1e;border:2px solid #0b0b0c;border-radius:5px;"></div>
<div class="t" style="top:1691.82px;font-size:24px;line-height:29px;color:#fff;left:1347.7px;width:72px;text-align:center;">1.00</div>
<div style="left:1440px;top:1127px;width:1440px;height:45px;background:#222126;"></div>
<div style="left:1440px;top:1172px;width:1440px;height:2px;background:#09090a;"></div>
<div class="t" style="top:1134.26px;font-size:25.5px;line-height:31px;color:#fff;-webkit-text-stroke:0.69px #fff;left:1457px;letter-spacing:1.2px;">Keyframes</div>
<div class="t" style="top:1133.02px;font-size:26.5px;line-height:32px;color:#fff;font-weight:700;left:2447.5px;">All</div>
<div style="left:2528px;top:1127px;width:2px;height:45px;background:#09090a;"></div>
<div style="left:2806px;top:1127px;width:2px;height:45px;background:#09090a;"></div>
<div style="left:1440px;top:1174px;width:339px;height:48px;background:#1e1e20;"></div>
<div style="left:1440px;top:1222px;width:339px;height:492px;background:#28272d;"></div>
<div style="left:1440px;top:1714px;width:339px;height:22px;background:#232326;"></div>
<div style="left:1779px;top:1174px;width:3px;height:540px;background:#09090a;"></div>
<div class="t" style="top:1183.17px;font-size:27.5px;line-height:33px;color:#8c8c8c;left:1459.0px;width:300px;text-align:center;letter-spacing:0.4px;">00:00:23:31</div>
<div class="t" style="top:1228.81px;font-size:24.5px;line-height:29px;color:#fff;left:1590.5px;letter-spacing:0.4px;">Master</div>
<div style="left:1440px;top:1268px;width:1416px;height:2px;background:#09090a;"></div>
<div style="left:1440px;top:1317px;width:1416px;height:2px;background:#09090a;"></div>
<div style="left:1440px;top:1367px;width:1416px;height:2px;background:#09090a;"></div>
<div class="t" style="top:1278.81px;font-size:24.5px;line-height:29px;color:#9a9a9a;left:1590.5px;">Corrector 1</div>
<div class="t" style="top:1328.81px;font-size:24.5px;line-height:29px;color:#9a9a9a;left:1590.5px;">Sizing</div>
<div style="left:1782px;top:1174px;width:1074px;height:48px;background:linear-gradient(180deg,#202024 0%,#26262b 50%,#2c2c31 100%);"></div>
<div style="left:2856px;top:1174px;width:24px;height:562px;background:#28272d;"></div>
<div style="left:1782px;top:1222px;width:1074px;height:46px;background:#757a86;"></div>
<div style="left:1782px;top:1270px;width:1074px;height:47px;background:#28272d;"></div>
<div style="left:1782px;top:1319px;width:1074px;height:48px;background:#28272d;"></div>
<div style="left:1782px;top:1369px;width:1074px;height:345px;background:#2d2e33;"></div>
<div style="left:1782px;top:1714px;width:1074px;height:22px;background:#28272d;"></div>
<div style="left:1792px;top:1174px;width:2px;height:47px;background:linear-gradient(180deg,#a0a0a0 0%,#808080 55%,rgba(90,90,90,0.1) 100%);"></div>
<div class="t" style="top:1182.58px;font-size:22px;line-height:26px;color:#9c9c9c;left:1804px;letter-spacing:-0.3px;">00:00:03:08</div>
<div style="left:2192px;top:1174px;width:2px;height:47px;background:linear-gradient(180deg,#a0a0a0 0%,#808080 55%,rgba(90,90,90,0.1) 100%);"></div>
<div class="t" style="top:1182.58px;font-size:22px;line-height:26px;color:#9c9c9c;left:2204px;letter-spacing:-0.3px;">00:00:21:47</div>
<div style="left:2592px;top:1174px;width:2px;height:47px;background:linear-gradient(180deg,#a0a0a0 0%,#808080 55%,rgba(90,90,90,0.1) 100%);"></div>
<div class="t" style="top:1182.58px;font-size:22px;line-height:26px;color:#9c9c9c;left:2604px;letter-spacing:-0.3px;">00:00:40:26</div>
<div style="left:1792.5px;top:1369px;width:1.4px;height:345px;background:#404146;"></div>
<div style="left:2190.5px;top:1369px;width:1.4px;height:345px;background:#404146;"></div>
<div style="left:2588.5px;top:1369px;width:1.4px;height:345px;background:#404146;"></div>
<div style="left:0px;top:1738px;width:2880px;height:62px;background:#18181b;"></div>
<div class="t" style="top:1754.38px;font-size:24px;line-height:29px;color:#fff;-webkit-text-stroke:0.65px #fff;left:104.8px;letter-spacing:1.94px;">DaVinci Resolve Studio 20</div>
<div style="left:1562px;top:1738px;width:236px;height:62px;background:#000;"></div>
<div style="left:1562px;top:1795px;width:236px;height:5px;background:#e64b3d;"></div>
<svg class="ov" viewBox="0 0 2880 1800" width="2880" height="1800"><defs><clipPath id="hlc"><rect x="1227" y="85" width="24" height="28"/></clipPath><linearGradient id="rb" x1="0" y1="0" x2="0" y2="1"><stop offset="0" stop-color="#f0452f"/><stop offset="0.3" stop-color="#e040c0"/><stop offset="0.55" stop-color="#5a6cf0"/><stop offset="0.8" stop-color="#30c8c0"/><stop offset="1" stop-color="#58d048"/></linearGradient><linearGradient id="band2" gradientUnits="userSpaceOnUse" x1="0" y1="254" x2="0" y2="776"><stop offset="0" stop-color="#e2e1c7"/><stop offset="0.35" stop-color="#e2e1c9"/><stop offset="0.8" stop-color="#e4e4d3"/><stop offset="1" stop-color="#e4e4d5"/></linearGradient><linearGradient id="pinb" x1="0" y1="0" x2="0" y2="1"><stop offset="0" stop-color="#6a6a6a"/><stop offset="0.45" stop-color="#3a3a3a"/><stop offset="1" stop-color="#1c1c1c"/></linearGradient><linearGradient id="pinn" x1="0" y1="0" x2="1" y2="0"><stop offset="0" stop-color="#4e4e4e"/><stop offset="0.5" stop-color="#b4b4b4"/><stop offset="0.75" stop-color="#8a8a8a"/><stop offset="1" stop-color="#444"/></linearGradient><linearGradient id="sky1" x1="0" y1="0" x2="1" y2="0"><stop offset="0" stop-color="#2f5552"/><stop offset="0.3" stop-color="#5d8a80"/><stop offset="0.48" stop-color="#9dbcaa"/><stop offset="0.7" stop-color="#6f968a"/><stop offset="1" stop-color="#3c5c54"/></linearGradient><radialGradient id="vig" cx="0.5" cy="0.5" r="0.75"><stop offset="0.55" stop-color="#000" stop-opacity="0"/><stop offset="1" stop-color="#000" stop-opacity="0.42"/></radialGradient><linearGradient id="gird" x1="1" y1="0" x2="0" y2="1"><stop offset="0" stop-color="#2685b2"/><stop offset="0.5" stop-color="#3f9cb8"/><stop offset="1" stop-color="#74bdba"/></linearGradient><linearGradient id="sky2" x1="0" y1="0" x2="1" y2="1"><stop offset="0" stop-color="#c6c6bd"/><stop offset="0.55" stop-color="#cbcac4"/><stop offset="1" stop-color="#dcdcd8"/></linearGradient><linearGradient id="sea3" x1="0" y1="0" x2="0.2" y2="1"><stop offset="0" stop-color="#3c4a5d"/><stop offset="0.4" stop-color="#263241"/><stop offset="0.8" stop-color="#131c27"/><stop offset="1" stop-color="#111923"/></linearGradient><pattern id="chk" width="7.2" height="7.2" patternUnits="userSpaceOnUse"><rect width="3.6" height="3.6" fill="#4a4a4d"/><rect x="3.6" y="3.6" width="3.6" height="3.6" fill="#4a4a4d"/></pattern><pattern id="chk2" width="7.2" height="7.2" patternUnits="userSpaceOnUse"><rect width="3.6" height="3.6" fill="#404043"/><rect x="3.6" y="3.6" width="3.6" height="3.6" fill="#404043"/></pattern><clipPath id="wc0"><circle cx="100.2" cy="1338" r="39.6"/></clipPath><radialGradient id="wg0" gradientUnits="userSpaceOnUse" cx="100.2" cy="1338" r="39.6"><stop offset="0" stop-color="#fff" stop-opacity="0.75"/><stop offset="0.6" stop-color="#fff" stop-opacity="0.5"/><stop offset="1" stop-color="#fff" stop-opacity="0.22"/></radialGradient><clipPath id="wc1"><circle cx="305.9" cy="1338" r="39.6"/></clipPath><radialGradient id="wg1" gradientUnits="userSpaceOnUse" cx="305.9" cy="1338" r="39.6"><stop offset="0" stop-color="#fff" stop-opacity="0.75"/><stop offset="0.6" stop-color="#fff" stop-opacity="0.5"/><stop offset="1" stop-color="#fff" stop-opacity="0.22"/></radialGradient><clipPath id="wc2"><circle cx="511.6" cy="1338" r="39.6"/></clipPath><radialGradient id="wg2" gradientUnits="userSpaceOnUse" cx="511.6" cy="1338" r="39.6"><stop offset="0" stop-color="#fff" stop-opacity="0.75"/><stop offset="0.6" stop-color="#fff" stop-opacity="0.5"/><stop offset="1" stop-color="#fff" stop-opacity="0.22"/></radialGradient><clipPath id="wc3"><circle cx="717.3" cy="1338" r="39.6"/></clipPath><radialGradient id="wg3" gradientUnits="userSpaceOnUse" cx="717.3" cy="1338" r="39.6"><stop offset="0" stop-color="#fff" stop-opacity="0.75"/><stop offset="0.6" stop-color="#fff" stop-opacity="0.5"/><stop offset="1" stop-color="#fff" stop-opacity="0.22"/></radialGradient><clipPath id="wc4"><circle cx="923.0" cy="1338" r="39.6"/></clipPath><radialGradient id="wg4" gradientUnits="userSpaceOnUse" cx="923.0" cy="1338" r="39.6"><stop offset="0" stop-color="#fff" stop-opacity="0.75"/><stop offset="0.6" stop-color="#fff" stop-opacity="0.5"/><stop offset="1" stop-color="#fff" stop-opacity="0.22"/></radialGradient><clipPath id="wc5"><circle cx="1128.7" cy="1338" r="39.6"/></clipPath><radialGradient id="wg5" gradientUnits="userSpaceOnUse" cx="1128.7" cy="1338" r="39.6"><stop offset="0" stop-color="#fff" stop-opacity="0.75"/><stop offset="0.6" stop-color="#fff" stop-opacity="0.5"/><stop offset="1" stop-color="#fff" stop-opacity="0.22"/></radialGradient><clipPath id="wc6"><circle cx="1334.4" cy="1338" r="39.6"/></clipPath><radialGradient id="wg6" gradientUnits="userSpaceOnUse" cx="1334.4" cy="1338" r="39.6"><stop offset="0" stop-color="#fff" stop-opacity="0.75"/><stop offset="0.6" stop-color="#fff" stop-opacity="0.5"/><stop offset="1" stop-color="#fff" stop-opacity="0.22"/></radialGradient></defs>
<g fill="none" stroke-linejoin="round" stroke-linecap="round"><path d="M40.5,32 L38.8,51.2 L69,54 L69.4,50.5" stroke="#dcdcdc" stroke-width="2"/><rect x="45" y="25" width="32" height="22" stroke="#fff" stroke-width="2.6" fill="#18181b"/><path d="M75,16.5 V21 M80,23 L83.4,19.4 M81.5,27 H86" stroke="#fff" stroke-width="2"/></g><circle cx="53" cy="31.2" r="3" fill="#fff"/><path d="M48.5,43.5 L55.5,36.5 L62,43.5 Z" fill="#b4b4b4"/><path d="M61.5,43.5 L68,32.5 L75,43.5 Z" fill="#6e6e6e"/>
<rect x="141" y="23" width="34" height="24" fill="none" stroke="#7b7b7b" stroke-width="2"/><circle cx="151" cy="31" r="3" fill="#7b7b7b"/><path d="M144,44 L151,36 L158,44 Z" fill="#565656"/><path d="M155,44 L164,29.5 L172.5,44 Z" fill="#484848"/><rect x="159" y="33" width="26" height="21" fill="#18181b"/>
<rect x="162" y="36" width="4" height="4" fill="#9a9a9a"/>
<rect x="168" y="36" width="4" height="4" fill="#858585"/>
<rect x="174" y="36" width="4" height="4" fill="#4a4a4a"/>
<rect x="180" y="36" width="4" height="4" fill="#4a4a4a"/>
<rect x="162" y="42" width="4" height="4" fill="#9a9a9a"/>
<rect x="168" y="42" width="4" height="4" fill="#858585"/>
<rect x="174" y="42" width="4" height="4" fill="#686868"/>
<rect x="180" y="42" width="4" height="4" fill="#4a4a4a"/>
<rect x="162" y="48" width="4" height="4" fill="#9a9a9a"/>
<rect x="168" y="48" width="4" height="4" fill="#858585"/>
<rect x="174" y="48" width="4" height="4" fill="#686868"/>
<rect x="180" y="48" width="4" height="4" fill="#4a4a4a"/>
<path d="M247,47 L243,24.5 L276,19.5 L277,25" fill="none" stroke="#5c5c5c" stroke-width="2" stroke-linejoin="round"/><rect x="249" y="27" width="34" height="24" rx="1.5" fill="#18181b" stroke="#7b7b7b" stroke-width="2"/><circle cx="259" cy="35" r="3" fill="#7b7b7b"/><path d="M252,48 V44.5 L258,41 L264,45.5 L272,37 L280,42.5 V48 Z" fill="#3f3f3f"/><path d="M252,44.5 L258,41 L264,45.5 L272,37 L280,42.5" fill="none" stroke="#8a8a8a" stroke-width="1.8"/>
<g fill="none" stroke="#7b7b7b" stroke-width="2"><path d="M336,25 H341 V49 H336"/><path d="M390,25 H385 V49 H390"/><rect x="347" y="25" width="32" height="24" rx="1.5"/></g><circle cx="355" cy="33" r="3" fill="#7b7b7b"/><path d="M349.5,46.5 L356,39 L362.5,46.5 Z" fill="#6a6a6a"/><path d="M361,46.5 L369,31.5 L377,42 V46.5 Z" fill="#595959"/><path d="M414.5,33 L423,41.5 L431.5,33" fill="none" stroke="#56565a" stroke-width="2.6"/>
<path d="M2411,37 H2405 V51 H2439 V37 H2433" fill="none" stroke="#6a6a6a" stroke-width="2" stroke-linejoin="round"/><rect x="2406" y="40" width="32" height="10" fill="#2c2c2f"/><path d="M2422,22 V40 M2414.5,28.5 L2422,21 L2429.5,28.5" fill="none" stroke="#6a6a6a" stroke-width="2"/>
<rect x="2502" y="32" width="34" height="6.5" rx="3" fill="#d8d8d8"/><rect x="2508" y="42" width="34" height="6.5" rx="3" fill="#d8d8d8"/><rect x="2520.6" y="24" width="5.2" height="29" fill="#18181b"/><rect x="2521.8" y="22" width="2.8" height="30.5" fill="#fff"/><path d="M2517.7,19.8 H2528.3 V25 L2523.2,28.2 L2517.7,25 Z" fill="#fff"/><rect x="2521" y="22" width="4.4" height="3" fill="#18181b"/>
<g fill="none" stroke="#7b7b7b" stroke-width="2"><rect x="2607" y="31" width="13" height="9" rx="2.5"/><rect x="2625" y="20.5" width="13" height="9" rx="2.5"/><rect x="2625" y="42.5" width="13" height="9" rx="2.5"/></g><path d="M2600,35.5 H2607 M2638,25 H2644 M2638,47 H2644 M2620,33.5 L2625,27 M2620,37.5 L2625,44" stroke="#5e5e5e" stroke-width="1.6" fill="none"/>
<circle cx="2727" cy="37" r="18" fill="none" stroke="#7b7b7b" stroke-width="2.4"/><text x="2727" y="46" text-anchor="middle" font-family="Liberation Sans, sans-serif" font-style="italic" font-weight="700" font-size="27" letter-spacing="-1.5" fill="#7b7b7b">fx</text>
<rect x="2809" y="21.0" width="8.5" height="6.5" fill="none" stroke="#7b7b7b" stroke-width="1.8"/>
<rect x="2823" y="21.0" width="8.5" height="6.5" fill="none" stroke="#7b7b7b" stroke-width="1.8"/>
<rect x="2837" y="21.0" width="8.5" height="6.5" fill="none" stroke="#7b7b7b" stroke-width="1.8"/>
<rect x="2809" y="32.8" width="8.5" height="6.5" fill="none" stroke="#7b7b7b" stroke-width="1.8"/>
<rect x="2823" y="32.8" width="8.5" height="6.5" fill="none" stroke="#7b7b7b" stroke-width="1.8"/>
<rect x="2837" y="32.8" width="8.5" height="6.5" fill="none" stroke="#7b7b7b" stroke-width="1.8"/>
<rect x="2809" y="44.6" width="8.5" height="6.5" fill="none" stroke="#7b7b7b" stroke-width="1.8"/>
<rect x="2823" y="44.6" width="8.5" height="6.5" fill="none" stroke="#7b7b7b" stroke-width="1.8"/>
<rect x="2837" y="44.6" width="8.5" height="6.5" fill="none" stroke="#7b7b7b" stroke-width="1.8"/>
<rect x="21" y="81" width="30" height="26" rx="1.5" fill="none" stroke="#4b4b4e" stroke-width="1.8"/><rect x="21" y="81" width="10.5" height="26" rx="1" fill="#505053" stroke="#8a8a8a" stroke-width="1.8"/>
<path d="M111,80.5 V95 M103.5,88.5 L111,96 L118.5,88.5" fill="none" stroke="#8c8c8c" stroke-width="2.4"/><path d="M97.3,108 V102 H124.7 V108" fill="none" stroke="#8c8c8c" stroke-width="2.6" stroke-linejoin="round"/>
<rect x="270" y="92" width="220" height="6" rx="3" fill="#17171a"/><circle cx="265" cy="95" r="9.2" fill="#9a9a9a"/>
<g stroke-linecap="round" fill="none"><path d="M535.5,86 H553" stroke="#7e7e7e" stroke-width="3.6"/><path d="M535.5,94 H548.5" stroke="#6a6a6a" stroke-width="3.6"/><path d="M535.5,102 H541" stroke="#555" stroke-width="3.6"/><path d="M562,83.5 V105 M555.5,99 L562,106 L568.5,99" stroke="#8c8c8c" stroke-width="2.6" stroke-linecap="butt"/></g>
<rect x="610" y="84" width="8.2" height="8.2" fill="#fff"/>
<rect x="622" y="84" width="8.2" height="8.2" fill="#fff"/>
<rect x="634" y="84" width="8.2" height="8.2" fill="#fff"/>
<rect x="610" y="96" width="8.2" height="8.2" fill="#fff"/>
<rect x="622" y="96" width="8.2" height="8.2" fill="#fff"/>
<rect x="634" y="96" width="8.2" height="8.2" fill="#fff"/>
<circle cx="670" cy="86" r="2" fill="#7e7e7e"/><rect x="676" y="84" width="20" height="4" rx="2" fill="#7e7e7e"/>
<circle cx="670" cy="94" r="2" fill="#7e7e7e"/><rect x="676" y="92" width="20" height="4" rx="2" fill="#7e7e7e"/>
<circle cx="670" cy="102" r="2" fill="#7e7e7e"/><rect x="676" y="100" width="20" height="4" rx="2" fill="#7e7e7e"/>
<circle cx="754.5" cy="93" r="11" fill="none" stroke="#8c8c8c" stroke-width="3"/><path d="M762.5,101.5 L770.5,108.5" stroke="#8c8c8c" stroke-width="3.6" stroke-linecap="round"/>
<g stroke="#7a7a7a" stroke-width="2" fill="none"><path d="M827.5,92.0 L817.8,82.3"/><path d="M825.8,82.3 H817.8 V90.3" stroke-linejoin="miter"/><path d="M832.5,92.0 L842.2,82.3"/><path d="M834.2,82.3 H842.2 V90.3" stroke-linejoin="miter"/><path d="M827.5,97.0 L817.8,106.7"/><path d="M825.8,106.7 H817.8 V98.7" stroke-linejoin="miter"/><path d="M832.5,97.0 L842.2,106.7"/><path d="M834.2,106.7 H842.2 V98.7" stroke-linejoin="miter"/></g>
<circle cx="890" cy="94" r="4" fill="#8c8c8c"/>
<circle cx="904" cy="94" r="4" fill="#8c8c8c"/>
<circle cx="918" cy="94" r="4" fill="#8c8c8c"/>
<path d="M1038.5,91 L1047.5,100.5 L1056.5,91" fill="none" stroke="#7c7c7c" stroke-width="2.6"/>
<rect x="1089" y="87" width="40" height="24" fill="none" stroke="#555558" stroke-width="2"/><rect x="1092.5" y="90.5" width="14" height="17" fill="#3c3c40"/><rect x="1112" y="90.5" width="14" height="17" fill="#8a8a8a"/><path d="M1109,84 V114" stroke="#9a9a9a" stroke-width="1.6" stroke-dasharray="2.5,2"/>
<rect x="1159" y="87" width="40" height="24" fill="none" stroke="#555558" stroke-width="2"/>
<rect x="1162.5" y="90.5" width="9.5" height="7" fill="#3c3c40"/>
<rect x="1174.2" y="90.5" width="9.5" height="7" fill="#3c3c40"/>
<rect x="1185.9" y="90.5" width="9.5" height="7" fill="#3c3c40"/>
<rect x="1162.5" y="99.5" width="9.5" height="7" fill="#3c3c40"/>
<rect x="1174.2" y="99.5" width="9.5" height="7" fill="#3c3c40"/>
<rect x="1185.9" y="99.5" width="9.5" height="7" fill="#3c3c40"/>
<rect x="1250" y="85" width="21" height="28" rx="2" fill="#404044"/><path d="M1201,113 L1229,85 M1207,113 L1235,85 M1213,113 L1241,85 M1219,113 L1247,85 M1225,113 L1253,85 M1231,113 L1259,85 M1237,113 L1265,85 M1243,113 L1271,85 M1249,113 L1277,85 " stroke="#4a4a4e" stroke-width="2.4" clip-path="url(#hlc)"/><circle cx="1249.5" cy="99" r="11.5" fill="#222126"/><path d="M1250,88 A11,11 0 0 1 1250,110 Z" fill="#8e8e8e"/>
<circle cx="1314" cy="94" r="5" fill="#2c2c30" stroke="#48484c" stroke-width="1.8"/>
<path d="M2046.5,91 L2055.5,100.5 L2064.5,91" fill="none" stroke="#7c7c7c" stroke-width="2.6"/>
<path d="M2514.5,91 L2523.5,100.5 L2532.5,91" fill="none" stroke="#7c7c7c" stroke-width="2.6"/>
<rect x="2569" y="83" width="34" height="22" rx="3" fill="none" stroke="#fff" stroke-width="2.2"/><path d="M2578,83 V105" stroke="#fff" stroke-width="0"/><rect x="2572.5" y="87" width="3.6" height="3.4" fill="#fff"/><rect x="2572.5" y="93" width="3.6" height="3.4" fill="#fff"/><rect x="2572.5" y="99" width="3.6" height="3.4" fill="#fff"/><rect x="2596" y="87" width="3.6" height="3.4" fill="#fff"/><rect x="2578" y="94.5" width="31" height="16" rx="2.5" fill="#c855d2" stroke="#222126" stroke-width="1.5"/><text x="2593.5" y="107.5" text-anchor="middle" font-family="Liberation Sans, sans-serif" font-weight="700" font-size="12.5" letter-spacing="0.6" fill="#fff">PXY</text>
<path d="M2622.5,91 L2631.5,100.5 L2640.5,91" fill="none" stroke="#7c7c7c" stroke-width="2.6"/>
<path d="M2689,86.5 A13,13 0 1 1 2698,104.5" fill="none" stroke="url(#rb)" stroke-width="3.2" stroke-linecap="round"/><path d="M2689,86.5 A13,13 0 0 1 2700,78.6" fill="none" stroke="#f08a30" stroke-width="3.2" stroke-linecap="round"/>
<path d="M2683,86.0 Q2684.21,90.29 2688.5,91.5 Q2684.21,92.71 2683,97.0 Q2681.79,92.71 2677.5,91.5 Q2681.79,90.29 2683,86.0 Z" fill="#f5e04a" stroke="#1a1a12" stroke-width="0.8"/><path d="M2695.5,88.5 Q2696.93,93.57 2702.0,95 Q2696.93,96.43 2695.5,101.5 Q2694.07,96.43 2689.0,95 Q2694.07,93.57 2695.5,88.5 Z" fill="#f5e04a" stroke="#1a1a12" stroke-width="0.8"/><path d="M2687,96 Q2688.54,101.46 2694,103 Q2688.54,104.54 2687,110 Q2685.46,104.54 2680,103 Q2685.46,101.46 2687,96 Z" fill="#f5e04a" stroke="#1a1a12" stroke-width="0.8"/>
<g stroke="#7a7a7a" stroke-width="2" fill="none"><path d="M2767.5,92.0 L2757.8,82.3"/><path d="M2765.8,82.3 H2757.8 V90.3" stroke-linejoin="miter"/><path d="M2772.5,92.0 L2782.2,82.3"/><path d="M2774.2,82.3 H2782.2 V90.3" stroke-linejoin="miter"/><path d="M2767.5,97.0 L2757.8,106.7"/><path d="M2765.8,106.7 H2757.8 V98.7" stroke-linejoin="miter"/><path d="M2772.5,97.0 L2782.2,106.7"/><path d="M2774.2,106.7 H2782.2 V98.7" stroke-linejoin="miter"/></g>
<circle cx="2830" cy="94" r="4" fill="#8c8c8c"/>
<circle cx="2844" cy="94" r="4" fill="#8c8c8c"/>
<circle cx="2858" cy="94" r="4" fill="#8c8c8c"/>
<path d="M1379,254 L1440,280 Q1560,332 1660,370 Q1760,408 1846,432 Q1950,460 2050,478 Q2150,494 2250,501 Q2340,508 2397,508 L2443,505 V776 H1379 Z" fill="url(#band2)"/>
<path d="M1379,542 L1897,776 H1379 Z" fill="#e7e7de"/>
<path d="M2443,640 L2330,690 L2250,776 H2443 Z" fill="#e6e6da" opacity="0.55"/>
<path d="M1379,218 L1679,178 H1379 Z" fill="#ebe7c4" opacity="0.3"/>
<path d="M1410,250.5 L1679,250.5 L1678,254.7 L1412,253.7 Z" fill="#6d6836" opacity="0.42"/>
<rect x="1407" y="197" width="274" height="55.0" fill="#c9c089" opacity="0.45"/>
<rect x="1408" y="198" width="272" height="53.5" fill="#fddf3f"/>
<path d="M1650.4,277 L1954.5,277 L1953.5,281.2 L1652.4,280.2 Z" fill="#6d6836" opacity="0.42"/>
<rect x="1647.4" y="223.8" width="309.0999999999999" height="54.69999999999999" fill="#c9c089" opacity="0.45"/>
<rect x="1648.4" y="224.8" width="307.0999999999999" height="53.19999999999999" fill="#fddf3f"/>
<path d="M1917.5,250.5 L2222,250.5 L2221,254.7 L1919.5,253.7 Z" fill="#6d6836" opacity="0.42"/>
<rect x="1914.5" y="197" width="309.5" height="55.0" fill="#c9c089" opacity="0.45"/>
<rect x="1915.5" y="198" width="307.5" height="53.5" fill="#fddf3f"/>
<path d="M2165.5,277 L2401,277 L2400,281.2 L2167.5,280.2 Z" fill="#6d6836" opacity="0.42"/>
<rect x="2162.5" y="223.8" width="240.5" height="54.69999999999999" fill="#c9c089" opacity="0.45"/>
<rect x="2163.5" y="224.8" width="238.5" height="53.19999999999999" fill="#fddf3f"/>
<rect x="1504.5" y="184" width="78.20000000000005" height="19.5" fill="#efeee6" opacity="0.62" transform="rotate(-1.5 1543.6 193.75)"/>
<rect x="1762" y="210.7" width="78" height="18.80000000000001" fill="#efeee6" opacity="0.62" transform="rotate(-1.5 1801.0 220.1)"/>
<rect x="2029" y="184" width="78" height="19.5" fill="#efeee6" opacity="0.62" transform="rotate(-1.5 2068.0 193.75)"/>
<rect x="2242.7" y="210.7" width="77.90000000000009" height="18.80000000000001" fill="#efeee6" opacity="0.62" transform="rotate(-1.5 2281.6499999999996 220.1)"/>
<text x="1544" y="217.6" text-anchor="middle" font-family="Liberation Serif, serif" font-size="18.95" fill="#15120a" stroke="#15120a" stroke-width="0.35">Penerimaan Pajak dan Royalti Izin</text>
<text x="1544" y="241.8" text-anchor="middle" font-family="Liberation Serif, serif" font-size="18.95" fill="#15120a" stroke="#15120a" stroke-width="0.35">Usaha Pertambangan</text>
<text x="1802" y="244.6" text-anchor="middle" font-family="Liberation Serif, serif" font-size="18.95" fill="#15120a" stroke="#15120a" stroke-width="0.35">Devisa dari Ekspor Hasil Tambang</text>
<text x="1802" y="268.8" text-anchor="middle" font-family="Liberation Serif, serif" font-size="18.95" fill="#15120a" stroke="#15120a" stroke-width="0.35">Menguatkan Nilai Tukar Rupiah.</text>
<text x="2069" y="217.6" text-anchor="middle" font-family="Liberation Serif, serif" font-size="18.95" fill="#15120a" stroke="#15120a" stroke-width="0.35">Menyediakan Bahan Baku untuk</text>
<text x="2069" y="241.8" text-anchor="middle" font-family="Liberation Serif, serif" font-size="18.95" fill="#15120a" stroke="#15120a" stroke-width="0.35">Industri Dalam Negeri.</text>
<text x="2282.5" y="244.6" text-anchor="middle" font-family="Liberation Serif, serif" font-size="18.95" fill="#15120a" stroke="#15120a" stroke-width="0.35">Menciptakan Lapangan</text>
<text x="2282.5" y="268.8" text-anchor="middle" font-family="Liberation Serif, serif" font-size="18.95" fill="#15120a" stroke="#15120a" stroke-width="0.35">Pekerjaan.</text>
<path d="M1903.5,314.8 H1918.5 M1911,307.5 V322" stroke="#0f2131" stroke-width="3.4" fill="none"/>
<rect x="1431.5" y="431" width="268.5" height="186" rx="2" fill="#c8c6a4" opacity="0.35"/>
<rect x="1434.5" y="434" width="262.5" height="181" fill="#fff"/>
<rect x="1777.7" y="431" width="267.79999999999995" height="186" rx="2" fill="#c8c6a4" opacity="0.35"/>
<rect x="1780.7" y="434" width="261.79999999999995" height="181" fill="#fff"/>
<rect x="2129.7" y="431" width="268.0" height="186" rx="2" fill="#c8c6a4" opacity="0.35"/>
<rect x="2132.7" y="434" width="262.0" height="181" fill="#fff"/>
<g transform="translate(1444.8,444)"><clipPath id="cp1"><rect width="242" height="160"/></clipPath><g clip-path="url(#cp1)"><rect width="242" height="160" fill="#5a4935"/><rect width="242" height="24" fill="url(#sky1)"/><path d="M0,14 Q8,6 16,9 Q22,3 32,6 Q42,0 50,4 Q56,8 60,11 Q68,5 76,8 Q82,6 86,12 L88,22 H104 L106,16 Q112,2 122,0 H242 V44 H0 Z" fill="#25341f"/><path d="M90,24 Q100,16 112,20 Q124,14 134,22 Q150,16 168,22 Q190,16 210,22 L214,36 H90 Z" fill="#3b552e"/><path d="M0,20 Q20,14 40,20 Q56,16 70,24 V38 H0 Z" fill="#2e4226"/><rect x="88" y="8" width="9" height="13" fill="#aab2b8"/><rect x="97" y="12" width="6" height="9" fill="#8d969c"/><path d="M71,22 H92 L94,30 H72 Z" fill="#8c95aa"/><rect x="0" y="40" width="52" height="6" fill="#666b70"/><rect x="50" y="33" width="63" height="9.5" fill="#9a9267"/><rect x="132" y="29" width="74" height="9" fill="#8b8257"/><rect x="133" y="31" width="12" height="8" fill="#c79f1f"/><rect x="113" y="38" width="20" height="4" fill="#b9b6aa"/><path d="M0,46 H60 L70,44 H140 L150,38 H242 V112 L125,78 L48,80 L0,84 Z" fill="#5a4632"/><path d="M150,40 L242,34 V112 L205,100 L160,84 L150,66 Z" fill="#6f573a"/><path d="M176,50 L242,44 V96 L200,92 Z" fill="#7e6644" opacity="0.8"/><path d="M0,48 H56 L66,62 L40,66 H0 Z" fill="#62503a"/><path d="M60,50 L100,46 L140,48 L150,62 L100,64 L66,62 Z" fill="#4e3d2c"/><path d="M0,64 L66,62 L126,64 L150,66 L160,84 L125,78 L48,80 L0,84 Z" fill="#43382c"/><path d="M0,84 L48,80 L125,78 L242,112 V122 L60,138 L48,128 Z" fill="#56504a"/><path d="M58,80 L96,79 L110,88 L70,92 Z" fill="#8d867a" opacity="0.85"/><path d="M48,96 L160,90 L236,112 L60,134 Z" fill="#615b55" opacity="0.8"/><path d="M0,84 L48,82 L48,128 L0,100 Z" fill="#4c4540"/><path d="M0,98 L48,127 L60,138 L78,160 H0 Z" fill="#6d4e29"/><path d="M0,120 L30,132 L52,150 L60,160 H0 Z" fill="#7a5a30" opacity="0.7"/><path d="M60,138 L242,119 V160 H78 Z" fill="#847a66"/><path d="M110,134 L242,122 V136 L150,148 Z" fill="#9a917c" opacity="0.75"/><path d="M176,150 Q196,140 216,152 L220,160 H172 Z" fill="#6b5232"/><g stroke="#2f2b27" stroke-width="3"><path d="M18,140 L70,146"/><path d="M14,151 L110,155"/><path d="M76,140 L104,154"/><path d="M98,138 L134,154"/><path d="M124,137 L172,152"/><path d="M152,134 L178,146"/><path d="M170,128 L236,146"/><path d="M192,126 L242,138"/></g><path d="M14,116 L26,150" stroke="#4a4036" stroke-width="2"/><g fill="#c4603f"><rect x="129" y="70" width="2.4" height="4"/><rect x="118" y="82" width="2.4" height="4.5"/><rect x="124" y="80" width="2" height="4"/><rect x="204" y="94" width="2.4" height="5"/><rect x="66" y="94" width="3" height="3"/></g><g fill="#c9a11f"><path d="M50,76 L53,74 L56,92 L52,92 Z"/><rect x="48.6" y="110" width="3.6" height="23"/><rect x="234" y="104" width="3.4" height="12"/><rect x="160" y="94" width="3" height="4"/></g><g fill="#5a2a2a"><rect x="111" y="106" width="4.6" height="13"/></g><rect x="161" y="97" width="4" height="14" fill="#4a483a"/><rect x="206" y="80" width="4" height="14" fill="#2e2e3a"/><circle cx="111.5" cy="93" r="2.4" fill="#4aa0b0"/><circle cx="79" cy="91" r="2" fill="#3a3a4a"/><circle cx="55" cy="92" r="2.2" fill="#5a6a7a"/><rect width="242" height="160" fill="url(#vig)"/></g></g>
<g transform="translate(1791,444)"><clipPath id="cp2"><rect width="241" height="160"/></clipPath><g clip-path="url(#cp2)"><rect width="241" height="160" fill="url(#sky2)"/><path d="M170,13 L241,-3 V10 L171,27 Z" fill="#cdb686"/><path d="M146,38 L171,26 L241,9 V37 L165,55 L146,43 Z" fill="#927450"/><path d="M171,27 L241,10 V22 L176,38 Z" fill="#a98b60" opacity="0.8"/><path d="M150,22 L170,14 V28 L152,36 Z" fill="#6a6560" opacity="0.75"/><path d="M146,60 L241,36 V66 L160,81 L147,69 Z" fill="#4b392b"/><path d="M165,55 L241,37 V42 L172,58 Z" fill="#c08a48" opacity="0.8"/><path d="M196,48 L241,38 V60 L200,68 Z" fill="#aaa294" opacity="0.7"/><path d="M150,64 L190,56 L192,64 L156,74 Z" fill="#8c8478" opacity="0.5"/><path d="M160,81 L241,64 V77 L168,93 Z" fill="#6b5b49"/><path d="M168,93 L241,77 V95 L188,105 Z" fill="#2b2521"/><path d="M161,76 L178,72.5 V79.5 L161,84 Z" fill="#b7c3ce"/><path d="M0,75 L95,40 L97,52 L0,86 Z" fill="#ccb182"/><path d="M0,80 L96,46 L97,52 L0,86 Z" fill="#b99a6a"/><path d="M0,86 L97,52 L128,60 L120,68 L0,98 Z" fill="#8b6b47"/><path d="M0,97 L128,59 V76 L120,79 V98 L108,100 L0,126 Z" fill="url(#gird)"/><path d="M14,100 L17,99 L14,122 L11,123 Z" fill="#3f86a0" opacity="0.7"/><path d="M0,125 L108,100 L109,103 L0,128 Z" fill="#c2a572"/><path d="M0,128 L109,103 L121,129 L28,149 L0,151 Z" fill="#1a3834"/><path d="M0,138 L112,110 L116,118 L0,146 Z" fill="#122724"/><path d="M40,122 L56,118 L92,132 L76,136 Z M70,114 L84,110 L118,124 L106,128 Z" fill="#3c2c22" opacity="0.7"/><path d="M0,148 H28 V160 H0 Z" fill="#bfbcb5"/><text x="5.5" y="158.6" font-family="Liberation Sans, sans-serif" font-weight="700" font-size="7.5" fill="#2a2a2a" letter-spacing="0.8">KM</text><path d="M138,72 L196,112 L198,135 L185,146 V160 H160 V142 L138,125 Z" fill="#775b3f"/><path d="M120,73 L138,72 V125 L160,142 V150 H133 V144 Q128,120 103,112 V100 L112,98 V91 L120,90 Z" fill="#a6875c"/><path d="M103,104 L137,99 V106 L104,111 Z" fill="#c8ac7c" opacity="0.8"/><path d="M107,104.5 L131,101 V105.5 L107,109 Z" fill="#2c241c" opacity="0.8"/><path d="M120,73 L138,72 V90 L120,90 Z" fill="#b89a6c" opacity="0.7"/><path d="M133,146 H167 V160 H133 Z" fill="#b7894a"/><path d="M167,146 H186 V160 H167 Z" fill="#4c3e30"/><path d="M185,141 L198,135 V160 H185 Z" fill="#14302b"/><path d="M128,60 L146,68 L147,76 L128,70 Z" fill="#2a2622"/><circle cx="178" cy="111" r="2.2" fill="#fff"/><path d="M176,113 L180,113 L179,126 L177,126 Z" fill="#e8e4d8" opacity="0.45"/><g stroke="#3c3832" stroke-width="0.8" fill="none"><path d="M96,36 L128,58 M98,48 L127,62 M104,44 L104,56 M112,48 L112,60 M120,52 L120,64 M152,40 L134,62 M156,44 L138,66 M148,38 L132,54 M121,128 V160 M132,128 V160 M121,140 H132 M121,152 H132"/></g></g></g>
<g transform="translate(2142.7,444)"><clipPath id="cp3"><rect width="241.7" height="160"/></clipPath><g clip-path="url(#cp3)"><rect width="242" height="160" fill="url(#sea3)"/><path d="M120,0 H242 V80 Q226,30 120,0 Z" fill="#5c6e84" opacity="0.42"/><path d="M0,0 H20 L22,5 L0,9 Z" fill="#55504c"/><path d="M0,14 L36,13 L38,17 L0,24 Z" fill="#7d838b"/><path d="M2,15 L26,14 L27,17 L2,20 Z" fill="#a9573f"/><path d="M0,28 L8,28 L9,33 L0,34 Z" fill="#a8543c"/><path d="M55,25 L70,18 L145,13 L165,20 L185,21 L186,24.5 L160,31 L100,41 L75,46 L62,42 Z" fill="#292b30"/><path d="M78,24 L144,17 L150,24 L84,34 Z" fill="#17191d"/><path d="M100,36 L160,27 L186,22 L186,24.5 L160,31 L100,41 Z" fill="#3a3d43"/><path d="M91,0 H93.4 L95,22 H92.6 Z" fill="#9aa0a4"/><path d="M0,53 Q30,40 57,33 L58,36 Q30,44 0,57 Z" fill="#c79a32"/><path d="M0,57 Q30,44 58,36 L62,42 L40,48 L0,62 Z" fill="#3b3d41"/><path d="M84,40 L104,38 L106,43 Q94,47 84,45 Z" fill="#b5482e"/><path d="M94,36 L104,36 L105,41 L95,42 Z" fill="#e0dcd6"/><path d="M0,60 L60,46 L100,45 L178,49 L236,120 L224,124 L78,120 L0,118 Z" fill="#24272c"/><path d="M100,45 L176,46 L190,51 L186,54 L104,53 Q98,50 100,45 Z" fill="#64433a"/><path d="M104,47 L176,48.5 L178,51 L106,50.5 Z" fill="#2b2422"/><path d="M176,39 L188,41 L191,51 L177,50 Z" fill="#dedad4"/><path d="M70,54 L174,54 L178,62 L68,62 Z" fill="#121418"/><path d="M70,66 L180,66 L184,72 L70,72 Z" fill="#131519"/><path d="M71,72 H121 V75 H71 Z M127,72 H182 V75 H127 Z" fill="#b38c45"/><path d="M68,78 L188,78 L194,91 L68,91 Z" fill="#121418"/><path d="M0,96 L200,96 L208,112 L0,112 Z" fill="#131519"/><path d="M0,112 L208,112 L236,120 L224,124 L78,120 L0,118 Z" fill="#2d2f33"/><path d="M0,66 L48,68 L52,74 L54,90 L0,93 Z" fill="#2c3036"/><path d="M0,74 Q30,66 52,80 L54,90 L0,93 Z" fill="#1b1d21"/><path d="M178,52 L190,52 L238,116 L236,122 L228,124 Z" fill="#3a3d44"/><path d="M186,50 L196,56 L232,108 L226,108 Z" fill="#8a8d92" opacity="0.55"/><path d="M138,90 H190 V92.5 H138 Z" fill="#a58542" opacity="0.85"/><path d="M80,124 Q77,114 86,112 L224,119 Q232,126 227,134 Q220,140.5 204,140.5 L118,139 Q88,134 80,124 Z" fill="#8e3a2b"/><path d="M100,113.5 L220,119 L224,131 L104,129 Z" fill="#6f3e34"/><path d="M86,130 Q100,135.5 120,136.5 L210,137.8 Q221,137 225.5,133 L226,135.5 Q219,140.5 204,140.5 L118,139 Q96,136.5 86,130 Z" fill="#c8482e"/><path d="M84,127 Q100,133 120,134 L212,135.5 Q222,134 226,130 L227,134 Q220,140.5 204,140.5 L118,139 Q92,135 84,127 Z" fill="#c0432c" opacity="0.0"/><g fill="#1c1e21"><rect x="105" y="119.5" width="11" height="6"/><rect x="121" y="120" width="11" height="6"/><rect x="137" y="120.7" width="11" height="6"/><rect x="153" y="121.4" width="11" height="6"/><rect x="169" y="122" width="11" height="6"/><rect x="185" y="122.7" width="11" height="6"/><rect x="201" y="123.4" width="11" height="6"/></g><path d="M86,110 L99,107 L100,127 L87,125 Z" fill="#dfdad4"/><path d="M80,116 L87,114 V124 L81,122 Z" fill="#c8c2ba"/><path d="M0,123 L42,126 L40,131 Q20,135 0,132 Z" fill="#7e422f"/><path d="M24,115 L42,117 L44,127 L26,127 Z" fill="#d9d4ce"/><path d="M0,116 L14,116 L14,126 L0,125 Z" fill="#8a5a40"/><path d="M112,12 L115,26 M134,16 L136,28 M150,14 L148,26 M158,15 L160,26 M76,28 L80,40 M112,40 L114,52 M138,38 L140,50 M154,40 L152,52 M170,40 L172,51 M100,50 L98,62 M143,52 L146,64 M64,72 L69,90 M110,76 L114,92 M148,80 L154,94 M156,80 L150,92 M2,92 L-6,108 M56,94 L63,112 M80,98 L88,112 M126,96 L133,114 M166,100 L158,114 M196,102 L188,114 M50,82 L46,90 M190,70 L194,84 M184,56 L188,66" stroke="#c9a23a" stroke-width="1.7" fill="none"/><rect width="242" height="160" fill="url(#vig)" opacity="0.6"/></g></g>
<path d="M1431,642 L1701.3,642 L1699.3,647.6 L1434,646.4 Z" fill="#6d6836" opacity="0.45"/>
<rect x="1429" y="614.5" width="273.29999999999995" height="29.5" fill="#fddf3f"/>
<rect x="1526.75" y="601.5" width="78.0" height="19.0" fill="#efeee6" opacity="0.62" transform="rotate(0 1565.75 611.0)"/>
<text x="1565.6" y="634.5" text-anchor="middle" font-family="Liberation Serif, serif" font-size="19.3" fill="#15120a" stroke="#15120a" stroke-width="0.35">Jalan Raya</text>
<ellipse cx="1565.75" cy="441.5" rx="11" ry="3" fill="#2a2a26" opacity="0.32"/><path d="M1567.55,437 L1566.35,442.8" stroke="#111" stroke-width="1.7" stroke-linecap="round"/><ellipse cx="1568.55" cy="433.8" rx="8.3" ry="6" fill="url(#pinb)"/><path d="M1564.75,422 L1563.35,432 Q1568.75,436 1574.15,432 L1574.35,422 Z" fill="url(#pinn)"/><ellipse cx="1569.75" cy="420.8" rx="6.4" ry="4.7" fill="#8e8e8e"/><ellipse cx="1569.95" cy="420.4" rx="5.2" ry="3.6" fill="#e2e2e4"/>
<path d="M1779.9,642 L2049.2,642 L2047.1999999999998,647.6 L1782.9,646.4 Z" fill="#6d6836" opacity="0.45"/>
<rect x="1777.9" y="614.5" width="272.2999999999997" height="29.5" fill="#fddf3f"/>
<rect x="1872.6" y="601.5" width="78.0" height="19.0" fill="#efeee6" opacity="0.62" transform="rotate(0 1911.6 611.0)"/>
<text x="1914" y="634.5" text-anchor="middle" font-family="Liberation Serif, serif" font-size="19.3" fill="#15120a" stroke="#15120a" stroke-width="0.35">Jembatan</text>
<ellipse cx="1911.6" cy="441.5" rx="11" ry="3" fill="#2a2a26" opacity="0.32"/><path d="M1913.3999999999999,437 L1912.1999999999998,442.8" stroke="#111" stroke-width="1.7" stroke-linecap="round"/><ellipse cx="1914.3999999999999" cy="433.8" rx="8.3" ry="6" fill="url(#pinb)"/><path d="M1910.6,422 L1909.1999999999998,432 Q1914.6,436 1920.0,432 L1920.1999999999998,422 Z" fill="url(#pinn)"/><ellipse cx="1915.6" cy="420.8" rx="6.4" ry="4.7" fill="#8e8e8e"/><ellipse cx="1915.8" cy="420.4" rx="5.2" ry="3.6" fill="#e2e2e4"/>
<path d="M2127.6,642 L2398.3,642 L2396.3,647.6 L2130.6,646.4 Z" fill="#6d6836" opacity="0.45"/>
<rect x="2125.6" y="614.5" width="273.7000000000003" height="29.5" fill="#fddf3f"/>
<rect x="2224.7" y="601.5" width="78.0" height="19.0" fill="#efeee6" opacity="0.62" transform="rotate(0 2263.7 611.0)"/>
<text x="2262.4" y="634.5" text-anchor="middle" font-family="Liberation Serif, serif" font-size="19.3" fill="#15120a" stroke="#15120a" stroke-width="0.35">Pelabuhan</text>
<ellipse cx="2263.7" cy="441.5" rx="11" ry="3" fill="#2a2a26" opacity="0.32"/><path d="M2265.5,437 L2264.2999999999997,442.8" stroke="#111" stroke-width="1.7" stroke-linecap="round"/><ellipse cx="2266.5" cy="433.8" rx="8.3" ry="6" fill="url(#pinb)"/><path d="M2262.7,422 L2261.2999999999997,432 Q2266.7,436 2272.1,432 L2272.2999999999997,422 Z" fill="url(#pinn)"/><ellipse cx="2267.7" cy="420.8" rx="6.4" ry="4.7" fill="#8e8e8e"/><ellipse cx="2267.8999999999996" cy="420.4" rx="5.2" ry="3.6" fill="#e2e2e4"/>
<ellipse cx="2258" cy="712" rx="24" ry="3.2" fill="#7a7660" opacity="0.35"/><path d="M2251.5,648 Q2251.5,643.5 2254.5,643.5 Q2257.8,643.5 2258,648 L2259,666 Q2266,664.5 2270,669 Q2273,673 2271.5,682 L2269.5,691 H2250 Q2243.5,681 2244,674 Q2244.5,668 2251,669.5 Z" fill="#f0c7a6"/><path d="M2259,667 Q2265,666 2268.5,670 Q2270.5,674 2269,682" fill="none" stroke="#dba684" stroke-width="1.2"/><path d="M2249.5,690 H2270 L2269.5,707 Q2259.5,710 2250.5,707 Z" fill="#f6dc6a"/><path d="M2249.5,690 H2270 V693.5 H2249.5 Z" fill="#f0e7b0"/>
<rect x="988" y="802" width="1845.5" height="3" rx="1.5" fill="#3e4048"/><rect x="1737" y="793" width="9" height="22" rx="1" fill="#0c0c0d"/><rect x="1739" y="795" width="5" height="18" fill="#fff"/>
<g transform="rotate(45 1005 861)"><rect x="1002" y="839.5" width="7" height="11" rx="1.5" fill="#8a8a8a"/><rect x="997.5" y="849.5" width="16" height="4.6" rx="1" fill="#8a8a8a"/><path d="M1002.4,854 H1008.6 V872 L1005.5,880.5 L1002.4,872 Z" fill="#747474"/><path d="M1005.5,879 V884.5" stroke="#747474" stroke-width="1.6"/></g>
<path d="M1034.5,857.5 L1043,866.5 L1051.5,857.5" fill="none" stroke="#7c7c7c" stroke-width="2.4"/>
<g fill="none" stroke-linejoin="round"><path d="M1079,865.5 L1094.5,873.5 L1110,865.5" stroke="#3f3f43" stroke-width="1.8"/><path d="M1079,860 L1094.5,868 L1110,860" stroke="#4e4e52" stroke-width="1.8"/><path d="M1094.5,846.5 L1110,854.5 L1094.5,862.5 L1079,854.5 Z" stroke="#76767a" stroke-width="1.8"/></g>
<path d="M1144,854.5 H1151.5 L1162,847.5 V874.5 L1151.5,867.5 H1144 Z" fill="#fff"/><path d="M1166,856.5 Q1169.5,861 1166,865.5" fill="none" stroke="#bdbdbd" stroke-width="2.6" stroke-linecap="round"/><path d="M1171.5,851.5 Q1178.5,861 1171.5,870.5" fill="none" stroke="#a8a8a8" stroke-width="2.8" stroke-linecap="round"/>
<rect x="1688" y="848" width="3.4" height="26" fill="#7e7e7e"/><path d="M1709,848 V874 L1691.5,861 Z M1727.5,848 V874 L1709,861 Z" fill="#7e7e7e"/><path d="M1784,848 V874 L1765,861 Z" fill="#7e7e7e"/><rect x="1824" y="848" width="26" height="26" fill="#7e7e7e"/><path d="M1890,848 V874 L1910,861 Z" fill="#7e7e7e"/><path d="M1945,848 V874 L1963.5,861 Z M1963.5,848 V874 L1982,861 Z" fill="#7e7e7e"/><rect x="1982" y="848" width="3.4" height="26" fill="#7e7e7e"/><path d="M2040,852.5 H2033 Q2023,852.5 2023,862.3 Q2023,872 2033,872 H2052.5 Q2062.5,872 2062.5,862.3 Q2062.5,853.6 2054.5,852.6" fill="none" stroke="#7e7e7e" stroke-width="3"/><path d="M2038.5,861 L2046.5,852.4 M2039.5,846 L2047,852.4" fill="none" stroke="#7e7e7e" stroke-width="3" stroke-linecap="round"/>
<path d="M253.3,933 H262.7 Q265.2,933 265.2,935.5 V943.5 L258,949.6 L250.8,943.5 V935.5 Q250.8,933 253.3,933 Z" fill="#0a80e4" stroke="#0b0f16" stroke-width="1.8" stroke-linejoin="round"/>
<path d="M281.3,933 H290.7 Q293.2,933 293.2,935.5 V943.5 L286,949.6 L278.8,943.5 V935.5 Q278.8,933 281.3,933 Z" fill="#0a80e4" stroke="#0b0f16" stroke-width="1.8" stroke-linejoin="round"/>
<path d="M310.3,933 H319.7 Q322.2,933 322.2,935.5 V943.5 L315.0,949.6 L307.8,943.5 V935.5 Q307.8,933 310.3,933 Z" fill="#0a80e4" stroke="#0b0f16" stroke-width="1.8" stroke-linejoin="round"/>
<path d="M315.85,933 H325.25 Q327.75,933 327.75,935.5 V943.5 L320.55,949.6 L313.35,943.5 V935.5 Q313.35,933 315.85,933 Z" fill="#0a80e4" stroke="#0b0f16" stroke-width="1.8" stroke-linejoin="round"/>
<path d="M321.40000000000003,933 H330.8 Q333.3,933 333.3,935.5 V943.5 L326.1,949.6 L318.90000000000003,943.5 V935.5 Q318.90000000000003,933 321.40000000000003,933 Z" fill="#0a80e4" stroke="#0b0f16" stroke-width="1.8" stroke-linejoin="round"/>
<path d="M326.95,933 H336.34999999999997 Q338.84999999999997,933 338.84999999999997,935.5 V943.5 L331.65,949.6 L324.45,943.5 V935.5 Q324.45,933 326.95,933 Z" fill="#0a80e4" stroke="#0b0f16" stroke-width="1.8" stroke-linejoin="round"/>
<path d="M332.5,933 H341.9 Q344.4,933 344.4,935.5 V943.5 L337.2,949.6 L330.0,943.5 V935.5 Q330.0,933 332.5,933 Z" fill="#0a80e4" stroke="#0b0f16" stroke-width="1.8" stroke-linejoin="round"/>
<path d="M338.05,933 H347.45 Q349.95,933 349.95,935.5 V943.5 L342.75,949.6 L335.55,943.5 V935.5 Q335.55,933 338.05,933 Z" fill="#0a80e4" stroke="#0b0f16" stroke-width="1.8" stroke-linejoin="round"/>
<path d="M343.6,933 H353.0 Q355.5,933 355.5,935.5 V943.5 L348.3,949.6 L341.1,943.5 V935.5 Q341.1,933 343.6,933 Z" fill="#0a80e4" stroke="#0b0f16" stroke-width="1.8" stroke-linejoin="round"/>
<path d="M349.15000000000003,933 H358.55 Q361.05,933 361.05,935.5 V943.5 L353.85,949.6 L346.65000000000003,943.5 V935.5 Q346.65000000000003,933 349.15000000000003,933 Z" fill="#0a80e4" stroke="#0b0f16" stroke-width="1.8" stroke-linejoin="round"/>
<path d="M354.7,933 H364.09999999999997 Q366.59999999999997,933 366.59999999999997,935.5 V943.5 L359.4,949.6 L352.2,943.5 V935.5 Q352.2,933 354.7,933 Z" fill="#0a80e4" stroke="#0b0f16" stroke-width="1.8" stroke-linejoin="round"/>
<path d="M360.25,933 H369.65 Q372.15,933 372.15,935.5 V943.5 L364.95,949.6 L357.75,943.5 V935.5 Q357.75,933 360.25,933 Z" fill="#0a80e4" stroke="#0b0f16" stroke-width="1.8" stroke-linejoin="round"/>
<path d="M365.8,933 H375.2 Q377.7,933 377.7,935.5 V943.5 L370.5,949.6 L363.3,943.5 V935.5 Q363.3,933 365.8,933 Z" fill="#0a80e4" stroke="#0b0f16" stroke-width="1.8" stroke-linejoin="round"/>
<path d="M391.3,933 H400.7 Q403.2,933 403.2,935.5 V943.5 L396,949.6 L388.8,943.5 V935.5 Q388.8,933 391.3,933 Z" fill="#0a80e4" stroke="#0b0f16" stroke-width="1.8" stroke-linejoin="round"/>
<path d="M401.8,933 H411.2 Q413.7,933 413.7,935.5 V943.5 L406.5,949.6 L399.3,943.5 V935.5 Q399.3,933 401.8,933 Z" fill="#0a80e4" stroke="#0b0f16" stroke-width="1.8" stroke-linejoin="round"/>
<path d="M504.8,933 H514.2 Q516.7,933 516.7,935.5 V943.5 L509.5,949.6 L502.3,943.5 V935.5 Q502.3,933 504.8,933 Z" fill="#0a80e4" stroke="#0b0f16" stroke-width="1.8" stroke-linejoin="round"/>
<path d="M531.8,933 H541.2 Q543.7,933 543.7,935.5 V943.5 L536.5,949.6 L529.3,943.5 V935.5 Q529.3,933 531.8,933 Z" fill="#0a80e4" stroke="#0b0f16" stroke-width="1.8" stroke-linejoin="round"/>
<path d="M537.3,933 H546.7 Q549.2,933 549.2,935.5 V943.5 L542.0,949.6 L534.8,943.5 V935.5 Q534.8,933 537.3,933 Z" fill="#0a80e4" stroke="#0b0f16" stroke-width="1.8" stroke-linejoin="round"/>
<path d="M542.8,933 H552.2 Q554.7,933 554.7,935.5 V943.5 L547.5,949.6 L540.3,943.5 V935.5 Q540.3,933 542.8,933 Z" fill="#0a80e4" stroke="#0b0f16" stroke-width="1.8" stroke-linejoin="round"/>
<path d="M548.3,933 H557.7 Q560.2,933 560.2,935.5 V943.5 L553.0,949.6 L545.8,943.5 V935.5 Q545.8,933 548.3,933 Z" fill="#0a80e4" stroke="#0b0f16" stroke-width="1.8" stroke-linejoin="round"/>
<path d="M553.8,933 H563.2 Q565.7,933 565.7,935.5 V943.5 L558.5,949.6 L551.3,943.5 V935.5 Q551.3,933 553.8,933 Z" fill="#0a80e4" stroke="#0b0f16" stroke-width="1.8" stroke-linejoin="round"/>
<path d="M559.3,933 H568.7 Q571.2,933 571.2,935.5 V943.5 L564.0,949.6 L556.8,943.5 V935.5 Q556.8,933 559.3,933 Z" fill="#0a80e4" stroke="#0b0f16" stroke-width="1.8" stroke-linejoin="round"/>
<path d="M564.8,933 H574.2 Q576.7,933 576.7,935.5 V943.5 L569.5,949.6 L562.3,943.5 V935.5 Q562.3,933 564.8,933 Z" fill="#0a80e4" stroke="#0b0f16" stroke-width="1.8" stroke-linejoin="round"/>
<path d="M570.3,933 H579.7 Q582.2,933 582.2,935.5 V943.5 L575.0,949.6 L567.8,943.5 V935.5 Q567.8,933 570.3,933 Z" fill="#0a80e4" stroke="#0b0f16" stroke-width="1.8" stroke-linejoin="round"/>
<path d="M617.3,933 H626.7 Q629.2,933 629.2,935.5 V943.5 L622,949.6 L614.8,943.5 V935.5 Q614.8,933 617.3,933 Z" fill="#0a80e4" stroke="#0b0f16" stroke-width="1.8" stroke-linejoin="round"/>
<path d="M631.8,933 H641.2 Q643.7,933 643.7,935.5 V943.5 L636.5,949.6 L629.3,943.5 V935.5 Q629.3,933 631.8,933 Z" fill="#0a80e4" stroke="#0b0f16" stroke-width="1.8" stroke-linejoin="round"/>
<path d="M642.8,933 H652.2 Q654.7,933 654.7,935.5 V943.5 L647.5,949.6 L640.3,943.5 V935.5 Q640.3,933 642.8,933 Z" fill="#0a80e4" stroke="#0b0f16" stroke-width="1.8" stroke-linejoin="round"/>
<path d="M657.3,933 H666.7 Q669.2,933 669.2,935.5 V943.5 L662,949.6 L654.8,943.5 V935.5 Q654.8,933 657.3,933 Z" fill="#0a80e4" stroke="#0b0f16" stroke-width="1.8" stroke-linejoin="round"/>
<path d="M721.3,933 H730.7 Q733.2,933 733.2,935.5 V943.5 L726,949.6 L718.8,943.5 V935.5 Q718.8,933 721.3,933 Z" fill="#0a80e4" stroke="#0b0f16" stroke-width="1.8" stroke-linejoin="round"/>
<path d="M735.3,933 H744.7 Q747.2,933 747.2,935.5 V943.5 L740,949.6 L732.8,943.5 V935.5 Q732.8,933 735.3,933 Z" fill="#0a80e4" stroke="#0b0f16" stroke-width="1.8" stroke-linejoin="round"/>
<path d="M763.3,933 H772.7 Q775.2,933 775.2,935.5 V943.5 L768,949.6 L760.8,943.5 V935.5 Q760.8,933 763.3,933 Z" fill="#0a80e4" stroke="#0b0f16" stroke-width="1.8" stroke-linejoin="round"/>
<path d="M768.8,933 H778.2 Q780.7,933 780.7,935.5 V943.5 L773.5,949.6 L766.3,943.5 V935.5 Q766.3,933 768.8,933 Z" fill="#0a80e4" stroke="#0b0f16" stroke-width="1.8" stroke-linejoin="round"/>
<path d="M774.3,933 H783.7 Q786.2,933 786.2,935.5 V943.5 L779,949.6 L771.8,943.5 V935.5 Q771.8,933 774.3,933 Z" fill="#0a80e4" stroke="#0b0f16" stroke-width="1.8" stroke-linejoin="round"/>
<path d="M779.8,933 H789.2 Q791.7,933 791.7,935.5 V943.5 L784.5,949.6 L777.3,943.5 V935.5 Q777.3,933 779.8,933 Z" fill="#0a80e4" stroke="#0b0f16" stroke-width="1.8" stroke-linejoin="round"/>
<path d="M818.8,933 H828.2 Q830.7,933 830.7,935.5 V943.5 L823.5,949.6 L816.3,943.5 V935.5 Q816.3,933 818.8,933 Z" fill="#0a80e4" stroke="#0b0f16" stroke-width="1.8" stroke-linejoin="round"/>
<path d="M887.0,933 H896.4000000000001 Q898.9000000000001,933 898.9000000000001,935.5 V943.5 L891.7,949.6 L884.5,943.5 V935.5 Q884.5,933 887.0,933 Z" fill="#0a80e4" stroke="#0b0f16" stroke-width="1.8" stroke-linejoin="round"/>
<path d="M957.3,933 H966.7 Q969.2,933 969.2,935.5 V943.5 L962,949.6 L954.8,943.5 V935.5 Q954.8,933 957.3,933 Z" fill="#0a80e4" stroke="#0b0f16" stroke-width="1.8" stroke-linejoin="round"/>
<path d="M1019.3,933 H1028.7 Q1031.2,933 1031.2,935.5 V943.5 L1024,949.6 L1016.8,943.5 V935.5 Q1016.8,933 1019.3,933 Z" fill="#0a80e4" stroke="#0b0f16" stroke-width="1.8" stroke-linejoin="round"/>
<path d="M152,1009.5 L158.6,1016 L152,1022.5 Z M165,1009.5 L158.6,1016 L165,1022.5 Z" fill="#d6d6d6"/>
<path d="M1225.5,902.5 Q1225.5,900 1228,900 H1252 Q1254.5,900 1254.5,902.5 V912 L1241.8,925 H1238.2 L1225.5,912 Z" fill="#e64b3d" stroke="#0d0d0e" stroke-width="1.6"/><rect x="1236.6" y="922" width="6.8" height="108.5" fill="#0d0d0e"/><rect x="1237.8" y="915" width="4.4" height="114.5" fill="#e64b3d"/>
<g fill="none" stroke="#7a7a7a" stroke-width="2.2" stroke-linejoin="round" stroke-linecap="round"><path d="M43.2,1084.5 L42.4,1076.5 Q42.4,1073.6 45.4,1072.4 L53.6,1069.4 Q55.2,1068.8 57,1069.3 L70,1072.8 Q73,1073.8 73.4,1077.2" fill="#2f2e34"/><path d="M43,1075 L57.2,1079.8 Q60,1080.8 60.3,1083.6 L61.3,1094.6 Q61.3,1096.4 59.6,1096.4 L58.4,1096.2"/><path d="M67,1084 L83,1078.2 Q86.4,1077.4 86.6,1080.8 V1092.4 Q86.6,1094.4 84.6,1095.4 L70.4,1101.8 Q67.6,1102.8 67,1099.6 Z" fill="#28272d"/><path d="M66.4,1084.6 V1099.4" stroke-width="3.4"/><path d="M74.6,1083.2 Q78.8,1084.6 78.2,1089.6 Q77.4,1094.2 73.2,1094.8 Q69.6,1094.6 69.4,1090.6" stroke-width="2"/></g><circle cx="44.9" cy="1097.1" r="12.4" fill="#28272d"/><circle cx="44.9" cy="1097.1" r="11.2" fill="#7a7a7a"/>
<path d="M56.4,1098.7 L41.3,1102.1 M49.2,1107.9 L38.7,1096.5 M37.8,1106.2 L42.4,1091.4 M33.4,1095.5 L48.5,1092.1 M40.6,1086.3 L51.1,1097.7 M52.0,1088.0 L47.4,1102.8 " stroke="#28272d" stroke-width="1.9" fill="none"/><circle cx="44.9" cy="1097.1" r="5.7" fill="#28272d"/>
<g fill="none" stroke="#7a7a7a" stroke-width="2"><path d="M168,1073 H161 V1080 M194,1073 H201 V1080 M168,1105 H161 V1098 M194,1105 H201 V1098"/></g>
<rect x="166" y="1078" width="6" height="6" fill="#8a8a8a"/>
<rect x="174" y="1078" width="6" height="6" fill="#6a6a6a"/>
<rect x="182" y="1078" width="6" height="6" fill="#9a9a9a"/>
<rect x="190" y="1078" width="6" height="6" fill="#777"/>
<rect x="166" y="1086" width="6" height="6" fill="#5d5d5d"/>
<rect x="174" y="1086" width="6" height="6" fill="#858585"/>
<rect x="182" y="1086" width="6" height="6" fill="#4d4d4d"/>
<rect x="190" y="1086" width="6" height="6" fill="#909090"/>
<rect x="166" y="1094" width="6" height="6" fill="#6e6e6e"/>
<rect x="174" y="1094" width="6" height="6" fill="#7d7d7d"/>
<rect x="182" y="1094" width="6" height="6" fill="#a0a0a0"/>
<rect x="190" y="1094" width="6" height="6" fill="#575757"/>
<circle cx="299.5" cy="1087" r="17.6" fill="none" stroke="#7a7a7a" stroke-width="2.4"/><circle cx="299.5" cy="1087" r="5" fill="#7a7a7a"/><path d="M299.5,1072 V1079 M299.5,1095 V1102 M284.5,1087 H291.5 M307.5,1087 H314.5" stroke="#505053" stroke-width="1.6"/>
<path d="M427,1098.5 A17.6,17.6 0 1 1 430.8,1088" fill="none" stroke="#7a7a7a" stroke-width="2.4"/><circle cx="413.5" cy="1087" r="5" fill="#7a7a7a"/><path d="M413.5,1072 V1079 M413.5,1095 V1102 M398.5,1087 H405.5 M421.5,1087 H428.5" stroke="#505053" stroke-width="1.6"/><rect x="411" y="1093" width="38" height="17" fill="#28272d"/><text x="413" y="1108.5" font-family="Liberation Sans, sans-serif" font-size="17.5" fill="#7a7a7a" letter-spacing="-0.5">HDR</text>
<circle cx="544.6" cy="1080" r="7.4" fill="#8a8a8a"/><circle cx="554.5" cy="1095.8" r="7.2" fill="#4a4a4d"/><circle cx="533.5" cy="1095.8" r="5.6" fill="none" stroke="#7a7a7a" stroke-width="3"/><path d="M530,1075.5 Q522.5,1076.5 522.8,1086" fill="none" stroke="#7a7a7a" stroke-width="2.2"/><path d="M518.5,1081.5 L522.8,1087 L527.4,1081.5" fill="none" stroke="#7a7a7a" stroke-width="2.2"/>
<rect x="644" y="1075" width="41" height="28" rx="2" fill="none" stroke="#7a7a7a" stroke-width="2"/><circle cx="659.5" cy="1083.5" r="3" fill="#7a7a7a"/><path d="M650,1099.5 L659.5,1089.5 L667,1097.5 V1099.5 Z" fill="#6a6a6a"/><path d="M664,1099.5 L674.5,1086.5 L682.5,1096.5 V1099.5 Z" fill="#58585b"/><g stroke="#7a7a7a" stroke-width="2" stroke-linecap="round"><path d="M633,1081.5 H643" stroke="#5a5a5d"/><path d="M636.5,1087.5 H648"/><path d="M633.5,1093.5 H646" stroke="#6a6a6d"/><path d="M640,1099.5 H648"/></g>
<g stroke="#4e4e52" stroke-width="1.8" fill="none"><path d="M762,1074 H800 M762,1084 H800 M762,1094 H800 M762,1104 H800 M762,1074 V1104 M771.5,1074 V1104 M781,1074 V1104 M790.5,1074 V1104 M800,1074 V1104"/></g><path d="M759,1105 C780,1103 782,1078 802,1072" fill="none" stroke="#8a8a8a" stroke-width="2.6" stroke-linecap="round"/><circle cx="804.5" cy="1060.7" r="3.4" fill="#e8453c"/>
<path d="M888.5,1076 Q899,1088 899,1093.5 A10.5,10.5 0 0 1 878,1093.5 Q878,1088 888.5,1076 Z" fill="none" stroke="#fff" stroke-width="3" stroke-linejoin="round"/>
<circle cx="904.5" cy="1078.0" r="2.1" fill="#d0d0d0"/>
<circle cx="911.1" cy="1078.0" r="2.1" fill="#a8a8a8"/>
<circle cx="917.7" cy="1078.0" r="2.1" fill="#7a7a7a"/>
<circle cx="924.3" cy="1078.0" r="2.1" fill="#4c4c4c"/>
<circle cx="904.5" cy="1085.2" r="2.1" fill="#d0d0d0"/>
<circle cx="911.1" cy="1085.2" r="2.1" fill="#a8a8a8"/>
<circle cx="917.7" cy="1085.2" r="2.1" fill="#7a7a7a"/>
<circle cx="924.3" cy="1085.2" r="2.1" fill="#4c4c4c"/>
<circle cx="904.5" cy="1092.4" r="2.1" fill="#d0d0d0"/>
<circle cx="911.1" cy="1092.4" r="2.1" fill="#a8a8a8"/>
<circle cx="917.7" cy="1092.4" r="2.1" fill="#7a7a7a"/>
<circle cx="924.3" cy="1092.4" r="2.1" fill="#4c4c4c"/>
<circle cx="904.5" cy="1099.6" r="2.1" fill="#d0d0d0"/>
<circle cx="911.1" cy="1099.6" r="2.1" fill="#a8a8a8"/>
<circle cx="917.7" cy="1099.6" r="2.1" fill="#7a7a7a"/>
<circle cx="924.3" cy="1099.6" r="2.1" fill="#4c4c4c"/>
<path d="M1040.3,1087.5 L1030.0,1105.3 L1009.5,1105.3 L999.3,1087.5 L1009.5,1069.7 L1030.0,1069.7 Z" fill="none" stroke="#6c6c6f" stroke-width="1.6"/><path d="M1019.8,1087.5 L1040.3,1087.5 M1019.8,1087.5 L1030.0,1105.3 M1019.8,1087.5 L1009.5,1105.3 M1019.8,1087.5 L999.3,1087.5 M1019.8,1087.5 L1009.5,1069.7 M1019.8,1087.5 L1030.0,1069.7 M1029.4,1087.5 L1024.6,1095.8 L1015.0,1095.8 L1010.2,1087.5 L1015.0,1079.2 L1024.6,1079.2 Z M1040.3,1087.5 L1024.6,1095.8 M1030.0,1105.3 L1015.0,1095.8 M1009.5,1105.3 L1010.2,1087.5 M999.3,1087.5 L1015.0,1079.2 M1009.5,1069.7 L1024.6,1079.2 M1030.0,1069.7 L1029.4,1087.5 " fill="none" stroke="#58585b" stroke-width="1.4"/>
<circle cx="1040.3" cy="1087.5" r="2" fill="#7a7a7a"/>
<circle cx="1030.0" cy="1105.3" r="2" fill="#7a7a7a"/>
<circle cx="1009.5" cy="1105.3" r="2" fill="#7a7a7a"/>
<circle cx="999.3" cy="1087.5" r="2" fill="#7a7a7a"/>
<circle cx="1009.5" cy="1069.7" r="2" fill="#7a7a7a"/>
<circle cx="1030.0" cy="1069.7" r="2" fill="#7a7a7a"/>
<circle cx="1029.4" cy="1087.5" r="2" fill="#7a7a7a"/>
<circle cx="1024.6" cy="1095.8" r="2" fill="#7a7a7a"/>
<circle cx="1015.0" cy="1095.8" r="2" fill="#7a7a7a"/>
<circle cx="1010.2" cy="1087.5" r="2" fill="#7a7a7a"/>
<circle cx="1015.0" cy="1079.2" r="2" fill="#7a7a7a"/>
<circle cx="1024.6" cy="1079.2" r="2" fill="#7a7a7a"/>
<circle cx="1019.8" cy="1087.5" r="2" fill="#7a7a7a"/>
<g transform="translate(1140.7 1088.4) scale(0.87) translate(-1140 -1088) rotate(45 1140 1088)"><rect x="1135.8" y="1063" width="9.4" height="13" rx="3" fill="#8c8c8c"/><rect x="1131" y="1075" width="19" height="5.4" rx="1.2" fill="#8c8c8c"/><path d="M1136.6,1080.4 H1144.4 V1101 L1140.5,1110 L1136.6,1101 Z" fill="#6c6c6c"/><path d="M1140.5,1108 V1116" stroke="#6c6c6c" stroke-width="1.6"/></g>
<ellipse cx="1259.8" cy="1088.5" rx="19.4" ry="13.2" fill="#333336" stroke="#7a7a7a" stroke-width="2"/>
<circle cx="1259.8" cy="1075.3" r="3.2" fill="#28272d" stroke="#7a7a7a" stroke-width="1.8"/>
<circle cx="1259.8" cy="1101.7" r="3.2" fill="#28272d" stroke="#7a7a7a" stroke-width="1.8"/>
<circle cx="1240.4" cy="1088.5" r="3.2" fill="#28272d" stroke="#7a7a7a" stroke-width="1.8"/>
<circle cx="1279.2" cy="1088.5" r="3.2" fill="#28272d" stroke="#7a7a7a" stroke-width="1.8"/>
<g fill="none" stroke="#59595c" stroke-width="2"><path d="M1366,1072 H1358 V1080 M1395,1072 H1403 V1080 M1366,1105 H1358 V1097 M1395,1105 H1403 V1097"/></g><circle cx="1380.6" cy="1088.5" r="11" fill="none" stroke="#7a7a7a" stroke-width="2.2"/><circle cx="1380.6" cy="1088.5" r="2.2" fill="#7a7a7a"/><path d="M1380.6,1072 V1082 M1380.6,1095 V1105 M1364,1088.5 H1374 M1387,1088.5 H1397" stroke="#7a7a7a" stroke-width="2"/>
<rect x="1474.4" y="1069.4" width="43.2" height="32.4" fill="url(#chk)"/>
<rect x="1485" y="1079" width="40" height="27.5" rx="1.5" fill="#28272d" stroke="#7a7a7a" stroke-width="2"/>
<rect x="1488.8" y="1080.2" width="32.4" height="25.2" fill="url(#chk2)"/>
<circle cx="1505" cy="1088.5" r="4.6" fill="#7a7a7a"/><path d="M1495,1104.5 Q1495,1095 1505,1095 Q1515,1095 1515,1104.5 Z" fill="#7a7a7a"/>
<path d="M1607.4,1070.5 Q1615.5,1081.5 1615.5,1087.5 A8.1,8.1 0 0 1 1599.3,1087.5 Q1599.3,1081.5 1607.4,1070.5 Z" fill="#7a7a7a"/><circle cx="1606.5" cy="1088" r="2.6" fill="#28272d" opacity="0.55"/><path d="M1627.5,1080.5 L1640,1105 H1615 Z" fill="#8a8a8a"/><path d="M1628,1088 L1635,1102 H1628 Z" fill="#5c5c5f"/>
<rect x="1714.4" y="1069.4" width="43.2" height="32.4" fill="url(#chk)"/>
<rect x="1724" y="1078" width="42" height="29" rx="2" fill="#434346"/><path d="M1724,1080 Q1724,1078 1726,1078 H1759 L1731,1107 H1726 Q1724,1107 1724,1105 Z" fill="#8a8a8a"/><circle cx="1745.5" cy="1092.5" r="6.6" fill="#121214"/>
<rect x="1842" y="1073" width="37" height="29.5" fill="#38383b" stroke="#8a8a8a" stroke-width="2" stroke-dasharray="2,2"/><g fill="none" stroke="#8a8a8a" stroke-width="2.2"><path d="M1870,1073 H1878 Q1884,1073 1884,1079 V1085"/><path d="M1879.4,1081 L1884,1086.4 L1888.6,1081"/><path d="M1851,1102.5 H1843 Q1837,1102.5 1837,1096.5 V1091"/><path d="M1832.4,1095 L1837,1089.6 L1841.6,1095"/></g>
<rect x="1963" y="1077" width="38" height="27" rx="3" fill="none" stroke="#4c4c4f" stroke-width="1.8"/><rect x="1959" y="1073" width="38" height="27.5" rx="3" fill="#28272d" stroke="#7a7a7a" stroke-width="2"/><text x="1978" y="1094.5" text-anchor="middle" font-family="Liberation Sans, sans-serif" font-size="20.5" fill="#7a7a7a">3D</text>
<path d="M2557.5,1087.6 L2570.5,1075 L2583.5,1087.6 L2570.5,1100.2 Z" fill="none" stroke="#5a5a5e" stroke-width="2"/><path d="M2566,1087.6 L2579,1075 L2592,1087.6 L2579,1100.2 Z" fill="#28272d" stroke="#c4c4c6" stroke-width="2"/><path d="M2577,1087.6 L2590.5,1074.4 L2604,1087.6 L2590.5,1100.8 Z" fill="#8a8a8a" stroke="#fff" stroke-width="2.6"/>
<path d="M2683.5,1072.5 V1103 H2722" fill="none" stroke="#7a7a7a" stroke-width="2"/><path d="M2686,1094 L2691,1078 L2695,1092 L2699.5,1082 L2703.5,1095 L2709,1077 L2713.5,1094 L2718,1085 L2721,1090 V1101.5 H2686 Z" fill="#4a4a4e"/><path d="M2686,1094 L2691,1078 L2695,1092 L2699.5,1082 L2703.5,1095 L2709,1077 L2713.5,1094 L2718,1085 L2721,1090" fill="none" stroke="#8a8a8a" stroke-width="2" stroke-linejoin="round"/>
<circle cx="2822.2" cy="1087.8" r="17" fill="none" stroke="#7a7a7a" stroke-width="2.4"/><circle cx="2822.2" cy="1079.5" r="2.4" fill="#7a7a7a"/><rect x="2820.3" y="1084.5" width="3.8" height="12.5" rx="1.2" fill="#7a7a7a"/>
<path d="M1391.2,1143.2 A12.6,12.6 0 1 1 1389.9,1151.5" fill="none" stroke="#707070" stroke-width="2.2"/><path d="M1389.3,1136.8 V1144.6 H1397" fill="none" stroke="#707070" stroke-width="2.2"/><path d="M1402.5,1143.5 V1154.5 M1397,1149 H1408" stroke="#707070" stroke-width="2"/>
<rect x="162.5" y="1228.5" width="1.6" height="3.6" fill="#fff" opacity="1.03"/>
<rect x="165.4" y="1228.5" width="1.6" height="3.6" fill="#fff" opacity="0.96"/>
<rect x="168.3" y="1228.5" width="1.6" height="3.6" fill="#fff" opacity="0.88"/>
<rect x="171.2" y="1228.5" width="1.6" height="3.6" fill="#fff" opacity="0.81"/>
<rect x="174.1" y="1228.5" width="1.6" height="3.6" fill="#fff" opacity="0.74"/>
<rect x="177.0" y="1228.5" width="1.6" height="3.6" fill="#fff" opacity="0.66"/>
<rect x="179.9" y="1228.5" width="1.6" height="3.6" fill="#fff" opacity="0.59"/>
<rect x="182.8" y="1228.5" width="1.6" height="3.6" fill="#fff" opacity="0.52"/>
<rect x="185.7" y="1228.5" width="1.6" height="3.6" fill="#fff" opacity="0.45"/>
<rect x="188.6" y="1228.5" width="1.6" height="3.6" fill="#fff" opacity="0.37"/>
<rect x="191.5" y="1228.5" width="1.6" height="3.6" fill="#fff" opacity="0.30"/>
<rect x="194.4" y="1228.5" width="1.6" height="3.6" fill="#fff" opacity="0.23"/>
<rect x="197.3" y="1228.5" width="1.6" height="3.6" fill="#fff" opacity="0.15"/>
<rect x="200.2" y="1228.5" width="1.6" height="3.6" fill="#fff" opacity="0.08"/>
<rect x="417.0" y="1228.6" width="1.7" height="3.4" fill="#8a8a8a"/>
<rect x="420.4" y="1228.6" width="1.7" height="3.4" fill="#8a8a8a"/>
<rect x="423.8" y="1228.6" width="1.7" height="3.4" fill="#8a8a8a"/>
<rect x="887.5" y="1228.6" width="1.7" height="3.4" fill="#8a8a8a"/>
<rect x="890.9" y="1228.6" width="1.7" height="3.4" fill="#8a8a8a"/>
<rect x="894.3" y="1228.6" width="1.7" height="3.4" fill="#8a8a8a"/>
<rect x="1119.5" y="1228.6" width="1.7" height="3.4" fill="#8a8a8a"/>
<rect x="1122.9" y="1228.6" width="1.7" height="3.4" fill="#8a8a8a"/>
<rect x="1126.3" y="1228.6" width="1.7" height="3.4" fill="#8a8a8a"/>
<circle cx="24.0" cy="1273" r="11.8" fill="none" stroke="#6e6e6e" stroke-width="2"/><path d="M24.6,1261.2 A11.8,11.8 0 0 1 24.6,1284.8 Z" fill="#848484"/>
<path d="M166.9,1266.3 A12.4,12.4 0 1 1 166.1,1273.7" fill="none" stroke="#707070" stroke-width="2.2"/><path d="M165.0,1259.3 V1267.3 H173.0" fill="none" stroke="#707070" stroke-width="2.2"/>
<g clip-path="url(#wc0)"><path d="M100.2,1338 L130.2,1286.0 L82.3,1249.8 L52.3,1301.9 Z" fill="url(#wg0)"/><path d="M100.2,1338 L142.2,1338.0" stroke="#fff" stroke-width="1.3" opacity="0.3"/><path d="M100.2,1338 L121.2,1301.6" stroke="#fff" stroke-width="1.5" opacity="0.62"/><path d="M100.2,1338 L79.2,1301.6" stroke="#fff" stroke-width="2.2"/><path d="M100.2,1338 L66.7,1312.7" stroke="#fff" stroke-width="1.5" opacity="0.62"/><path d="M100.2,1338 L58.2,1338.0" stroke="#fff" stroke-width="1.3" opacity="0.3"/><path d="M100.2,1338 L79.2,1374.4" stroke="#fff" stroke-width="1.3" opacity="0.3"/><path d="M100.2,1338 L121.2,1374.4" stroke="#fff" stroke-width="1.3" opacity="0.3"/></g>
<rect x="96.5" y="1429.7" width="10" height="5" rx="2.5" fill="#fff"/>
<rect x="95.5" y="1492.6" width="13" height="7.2" rx="3.6" fill="#0a0a0b"/>
<rect x="97.1" y="1493.7" width="10" height="5" rx="2.5" fill="#fff"/>
<rect x="40.0" y="1512" width="4" height="4" fill="#6a6a6a"/>
<rect x="46.0" y="1512" width="4" height="4" fill="#666"/>
<rect x="52.0" y="1512" width="4" height="4" fill="#5a5a5a"/>
<rect x="58.0" y="1512" width="4" height="4" fill="#48484a"/>
<rect x="64.0" y="1512" width="4" height="4" fill="#36363a"/>
<rect x="40.0" y="1518" width="4" height="4" fill="#6a6a6a"/>
<rect x="46.0" y="1518" width="4" height="4" fill="#666"/>
<rect x="52.0" y="1518" width="4" height="4" fill="#5a5a5a"/>
<rect x="58.0" y="1518" width="4" height="4" fill="#48484a"/>
<rect x="64.0" y="1518" width="4" height="4" fill="#36363a"/>
<rect x="40.0" y="1524" width="4" height="4" fill="#6a6a6a"/>
<rect x="46.0" y="1524" width="4" height="4" fill="#666"/>
<rect x="52.0" y="1524" width="4" height="4" fill="#5a5a5a"/>
<rect x="58.0" y="1524" width="4" height="4" fill="#48484a"/>
<rect x="64.0" y="1524" width="4" height="4" fill="#36363a"/>
<rect x="40.0" y="1530" width="4" height="4" fill="#6a6a6a"/>
<rect x="46.0" y="1530" width="4" height="4" fill="#666"/>
<rect x="52.0" y="1530" width="4" height="4" fill="#5a5a5a"/>
<rect x="58.0" y="1530" width="4" height="4" fill="#48484a"/>
<rect x="64.0" y="1530" width="4" height="4" fill="#36363a"/>
<path d="M149.8,1512 Q160.6,1523 160.6,1528 A10.8,9.8 0 0 1 139.0,1528 Q139.0,1523 149.8,1512 Z" fill="none" stroke="#767676" stroke-width="2.2" stroke-linejoin="round"/>
<rect x="48.0" y="1616.4" width="12" height="6" rx="3" fill="#b2b2b2" stroke="#1a1a1c" stroke-width="1.6"/>
<rect x="144.0" y="1616.4" width="12" height="6" rx="3" fill="#b2b2b2" stroke="#1a1a1c" stroke-width="1.6"/>
<circle cx="229.7" cy="1273" r="11.8" fill="none" stroke="#6e6e6e" stroke-width="2"/><path d="M230.3,1261.2 A11.8,11.8 0 0 1 230.3,1284.8 Z" fill="#848484"/>
<path d="M372.6,1266.3 A12.4,12.4 0 1 1 371.8,1273.7" fill="none" stroke="#707070" stroke-width="2.2"/><path d="M370.7,1259.3 V1267.3 H378.7" fill="none" stroke="#707070" stroke-width="2.2"/>
<g clip-path="url(#wc1)"><path d="M305.9,1338 L275.9,1286.0 L228.0,1293.0 L245.9,1338.0 Z" fill="url(#wg1)"/><path d="M305.9,1338 L347.9,1338.0" stroke="#fff" stroke-width="1.3" opacity="0.3"/><path d="M305.9,1338 L326.9,1301.6" stroke="#fff" stroke-width="1.3" opacity="0.3"/><path d="M305.9,1338 L284.9,1301.6" stroke="#fff" stroke-width="1.5" opacity="0.62"/><path d="M305.9,1338 L272.4,1312.7" stroke="#fff" stroke-width="2.2"/><path d="M305.9,1338 L263.9,1338.0" stroke="#fff" stroke-width="1.5" opacity="0.62"/><path d="M305.9,1338 L284.9,1374.4" stroke="#fff" stroke-width="1.3" opacity="0.3"/><path d="M305.9,1338 L326.9,1374.4" stroke="#fff" stroke-width="1.3" opacity="0.3"/></g>
<rect x="302.2" y="1429.7" width="10" height="5" rx="2.5" fill="#fff"/>
<rect x="301.2" y="1492.6" width="13" height="7.2" rx="3.6" fill="#0a0a0b"/>
<rect x="302.8" y="1493.7" width="10" height="5" rx="2.5" fill="#fff"/>
<rect x="245.7" y="1512" width="4" height="4" fill="#6a6a6a"/>
<rect x="251.7" y="1512" width="4" height="4" fill="#666"/>
<rect x="257.7" y="1512" width="4" height="4" fill="#5a5a5a"/>
<rect x="263.7" y="1512" width="4" height="4" fill="#48484a"/>
<rect x="269.7" y="1512" width="4" height="4" fill="#36363a"/>
<rect x="245.7" y="1518" width="4" height="4" fill="#6a6a6a"/>
<rect x="251.7" y="1518" width="4" height="4" fill="#666"/>
<rect x="257.7" y="1518" width="4" height="4" fill="#5a5a5a"/>
<rect x="263.7" y="1518" width="4" height="4" fill="#48484a"/>
<rect x="269.7" y="1518" width="4" height="4" fill="#36363a"/>
<rect x="245.7" y="1524" width="4" height="4" fill="#6a6a6a"/>
<rect x="251.7" y="1524" width="4" height="4" fill="#666"/>
<rect x="257.7" y="1524" width="4" height="4" fill="#5a5a5a"/>
<rect x="263.7" y="1524" width="4" height="4" fill="#48484a"/>
<rect x="269.7" y="1524" width="4" height="4" fill="#36363a"/>
<rect x="245.7" y="1530" width="4" height="4" fill="#6a6a6a"/>
<rect x="251.7" y="1530" width="4" height="4" fill="#666"/>
<rect x="257.7" y="1530" width="4" height="4" fill="#5a5a5a"/>
<rect x="263.7" y="1530" width="4" height="4" fill="#48484a"/>
<rect x="269.7" y="1530" width="4" height="4" fill="#36363a"/>
<path d="M355.5,1512 Q366.3,1523 366.3,1528 A10.8,9.8 0 0 1 344.7,1528 Q344.7,1523 355.5,1512 Z" fill="none" stroke="#767676" stroke-width="2.2" stroke-linejoin="round"/>
<rect x="253.7" y="1616.4" width="12" height="6" rx="3" fill="#b2b2b2" stroke="#1a1a1c" stroke-width="1.6"/>
<rect x="349.7" y="1616.4" width="12" height="6" rx="3" fill="#b2b2b2" stroke="#1a1a1c" stroke-width="1.6"/>
<circle cx="435.4" cy="1273" r="11.8" fill="none" stroke="#6e6e6e" stroke-width="2"/><path d="M436.0,1261.2 A11.8,11.8 0 0 1 436.0,1284.8 Z" fill="#848484"/>
<path d="M578.3,1266.3 A12.4,12.4 0 1 1 577.5,1273.7" fill="none" stroke="#707070" stroke-width="2.2"/><path d="M576.4,1259.3 V1267.3 H584.4" fill="none" stroke="#707070" stroke-width="2.2"/>
<g clip-path="url(#wc2)"><path d="M511.6,1338 L463.7,1301.9 L423.4,1355.9 L481.6,1390.0 Z" fill="url(#wg2)"/><path d="M511.6,1338 L553.6,1338.0" stroke="#fff" stroke-width="1.3" opacity="0.3"/><path d="M511.6,1338 L532.6,1301.6" stroke="#fff" stroke-width="1.3" opacity="0.3"/><path d="M511.6,1338 L490.6,1301.6" stroke="#fff" stroke-width="1.3" opacity="0.3"/><path d="M511.6,1338 L478.1,1312.7" stroke="#fff" stroke-width="1.5" opacity="0.62"/><path d="M511.6,1338 L469.6,1338.0" stroke="#fff" stroke-width="2.2"/><path d="M511.6,1338 L490.6,1374.4" stroke="#fff" stroke-width="1.5" opacity="0.62"/><path d="M511.6,1338 L532.6,1374.4" stroke="#fff" stroke-width="1.3" opacity="0.3"/></g>
<rect x="507.9" y="1429.7" width="10" height="5" rx="2.5" fill="#fff"/>
<rect x="506.9" y="1492.6" width="13" height="7.2" rx="3.6" fill="#0a0a0b"/>
<rect x="508.5" y="1493.7" width="10" height="5" rx="2.5" fill="#fff"/>
<rect x="451.4" y="1512" width="4" height="4" fill="#6a6a6a"/>
<rect x="457.4" y="1512" width="4" height="4" fill="#666"/>
<rect x="463.4" y="1512" width="4" height="4" fill="#5a5a5a"/>
<rect x="469.4" y="1512" width="4" height="4" fill="#48484a"/>
<rect x="475.4" y="1512" width="4" height="4" fill="#36363a"/>
<rect x="451.4" y="1518" width="4" height="4" fill="#6a6a6a"/>
<rect x="457.4" y="1518" width="4" height="4" fill="#666"/>
<rect x="463.4" y="1518" width="4" height="4" fill="#5a5a5a"/>
<rect x="469.4" y="1518" width="4" height="4" fill="#48484a"/>
<rect x="475.4" y="1518" width="4" height="4" fill="#36363a"/>
<rect x="451.4" y="1524" width="4" height="4" fill="#6a6a6a"/>
<rect x="457.4" y="1524" width="4" height="4" fill="#666"/>
<rect x="463.4" y="1524" width="4" height="4" fill="#5a5a5a"/>
<rect x="469.4" y="1524" width="4" height="4" fill="#48484a"/>
<rect x="475.4" y="1524" width="4" height="4" fill="#36363a"/>
<rect x="451.4" y="1530" width="4" height="4" fill="#6a6a6a"/>
<rect x="457.4" y="1530" width="4" height="4" fill="#666"/>
<rect x="463.4" y="1530" width="4" height="4" fill="#5a5a5a"/>
<rect x="469.4" y="1530" width="4" height="4" fill="#48484a"/>
<rect x="475.4" y="1530" width="4" height="4" fill="#36363a"/>
<path d="M561.2,1512 Q572.0,1523 572.0,1528 A10.8,9.8 0 0 1 550.4,1528 Q550.4,1523 561.2,1512 Z" fill="none" stroke="#767676" stroke-width="2.2" stroke-linejoin="round"/>
<rect x="459.4" y="1616.4" width="12" height="6" rx="3" fill="#b2b2b2" stroke="#1a1a1c" stroke-width="1.6"/>
<rect x="555.4" y="1616.4" width="12" height="6" rx="3" fill="#b2b2b2" stroke="#1a1a1c" stroke-width="1.6"/>
<circle cx="641.1" cy="1273" r="11.8" fill="none" stroke="#6e6e6e" stroke-width="2"/><path d="M641.7,1261.2 A11.8,11.8 0 0 1 641.7,1284.8 Z" fill="#848484"/>
<path d="M784.0,1266.3 A12.4,12.4 0 1 1 783.2,1273.7" fill="none" stroke="#707070" stroke-width="2.2"/><path d="M782.1,1259.3 V1267.3 H790.1" fill="none" stroke="#707070" stroke-width="2.2"/>
<g clip-path="url(#wc3)"><path d="M717.3,1338 L657.3,1338.0 L672.3,1415.9 L747.3,1390.0 Z" fill="url(#wg3)"/><path d="M717.3,1338 L759.3,1338.0" stroke="#fff" stroke-width="1.3" opacity="0.3"/><path d="M717.3,1338 L738.3,1301.6" stroke="#fff" stroke-width="1.3" opacity="0.3"/><path d="M717.3,1338 L696.3,1301.6" stroke="#fff" stroke-width="1.3" opacity="0.3"/><path d="M717.3,1338 L675.3,1338.0" stroke="#fff" stroke-width="1.5" opacity="0.62"/><path d="M717.3,1338 L696.3,1374.4" stroke="#fff" stroke-width="2.2"/><path d="M717.3,1338 L738.3,1374.4" stroke="#fff" stroke-width="1.5" opacity="0.62"/></g>
<rect x="713.6" y="1429.7" width="10" height="5" rx="2.5" fill="#fff"/>
<rect x="712.6" y="1492.6" width="13" height="7.2" rx="3.6" fill="#0a0a0b"/>
<rect x="714.2" y="1493.7" width="10" height="5" rx="2.5" fill="#fff"/>
<rect x="657.1" y="1512" width="4" height="4" fill="#6a6a6a"/>
<rect x="663.1" y="1512" width="4" height="4" fill="#666"/>
<rect x="669.1" y="1512" width="4" height="4" fill="#5a5a5a"/>
<rect x="675.1" y="1512" width="4" height="4" fill="#48484a"/>
<rect x="681.1" y="1512" width="4" height="4" fill="#36363a"/>
<rect x="657.1" y="1518" width="4" height="4" fill="#6a6a6a"/>
<rect x="663.1" y="1518" width="4" height="4" fill="#666"/>
<rect x="669.1" y="1518" width="4" height="4" fill="#5a5a5a"/>
<rect x="675.1" y="1518" width="4" height="4" fill="#48484a"/>
<rect x="681.1" y="1518" width="4" height="4" fill="#36363a"/>
<rect x="657.1" y="1524" width="4" height="4" fill="#6a6a6a"/>
<rect x="663.1" y="1524" width="4" height="4" fill="#666"/>
<rect x="669.1" y="1524" width="4" height="4" fill="#5a5a5a"/>
<rect x="675.1" y="1524" width="4" height="4" fill="#48484a"/>
<rect x="681.1" y="1524" width="4" height="4" fill="#36363a"/>
<rect x="657.1" y="1530" width="4" height="4" fill="#6a6a6a"/>
<rect x="663.1" y="1530" width="4" height="4" fill="#666"/>
<rect x="669.1" y="1530" width="4" height="4" fill="#5a5a5a"/>
<rect x="675.1" y="1530" width="4" height="4" fill="#48484a"/>
<rect x="681.1" y="1530" width="4" height="4" fill="#36363a"/>
<path d="M766.9,1512 Q777.7,1523 777.7,1528 A10.8,9.8 0 0 1 756.1,1528 Q756.1,1523 766.9,1512 Z" fill="none" stroke="#767676" stroke-width="2.2" stroke-linejoin="round"/>
<rect x="665.1" y="1616.4" width="12" height="6" rx="3" fill="#b2b2b2" stroke="#1a1a1c" stroke-width="1.6"/>
<rect x="761.1" y="1616.4" width="12" height="6" rx="3" fill="#b2b2b2" stroke="#1a1a1c" stroke-width="1.6"/>
<circle cx="846.8" cy="1273" r="11.8" fill="none" stroke="#6e6e6e" stroke-width="2"/><path d="M847.4,1261.2 A11.8,11.8 0 0 1 847.4,1284.8 Z" fill="#848484"/>
<path d="M989.7,1266.3 A12.4,12.4 0 1 1 988.9,1273.7" fill="none" stroke="#707070" stroke-width="2.2"/><path d="M987.8,1259.3 V1267.3 H995.8" fill="none" stroke="#707070" stroke-width="2.2"/>
<g clip-path="url(#wc4)"><path d="M923.0,1338 L893.0,1390.0 L968.0,1415.9 L983.0,1338.0 Z" fill="url(#wg4)"/><path d="M923.0,1338 L965.0,1338.0" stroke="#fff" stroke-width="1.5" opacity="0.62"/><path d="M923.0,1338 L944.0,1301.6" stroke="#fff" stroke-width="1.3" opacity="0.3"/><path d="M923.0,1338 L902.0,1301.6" stroke="#fff" stroke-width="1.3" opacity="0.3"/><path d="M923.0,1338 L881.0,1338.0" stroke="#fff" stroke-width="1.3" opacity="0.3"/><path d="M923.0,1338 L902.0,1374.4" stroke="#fff" stroke-width="1.5" opacity="0.62"/><path d="M923.0,1338 L944.0,1374.4" stroke="#fff" stroke-width="2.2"/></g>
<rect x="919.3" y="1429.7" width="10" height="5" rx="2.5" fill="#fff"/>
<rect x="918.3" y="1492.6" width="13" height="7.2" rx="3.6" fill="#0a0a0b"/>
<rect x="919.9" y="1493.7" width="10" height="5" rx="2.5" fill="#fff"/>
<rect x="862.8" y="1512" width="4" height="4" fill="#6a6a6a"/>
<rect x="868.8" y="1512" width="4" height="4" fill="#666"/>
<rect x="874.8" y="1512" width="4" height="4" fill="#5a5a5a"/>
<rect x="880.8" y="1512" width="4" height="4" fill="#48484a"/>
<rect x="886.8" y="1512" width="4" height="4" fill="#36363a"/>
<rect x="862.8" y="1518" width="4" height="4" fill="#6a6a6a"/>
<rect x="868.8" y="1518" width="4" height="4" fill="#666"/>
<rect x="874.8" y="1518" width="4" height="4" fill="#5a5a5a"/>
<rect x="880.8" y="1518" width="4" height="4" fill="#48484a"/>
<rect x="886.8" y="1518" width="4" height="4" fill="#36363a"/>
<rect x="862.8" y="1524" width="4" height="4" fill="#6a6a6a"/>
<rect x="868.8" y="1524" width="4" height="4" fill="#666"/>
<rect x="874.8" y="1524" width="4" height="4" fill="#5a5a5a"/>
<rect x="880.8" y="1524" width="4" height="4" fill="#48484a"/>
<rect x="886.8" y="1524" width="4" height="4" fill="#36363a"/>
<rect x="862.8" y="1530" width="4" height="4" fill="#6a6a6a"/>
<rect x="868.8" y="1530" width="4" height="4" fill="#666"/>
<rect x="874.8" y="1530" width="4" height="4" fill="#5a5a5a"/>
<rect x="880.8" y="1530" width="4" height="4" fill="#48484a"/>
<rect x="886.8" y="1530" width="4" height="4" fill="#36363a"/>
<path d="M972.6,1512 Q983.4,1523 983.4,1528 A10.8,9.8 0 0 1 961.8,1528 Q961.8,1523 972.6,1512 Z" fill="none" stroke="#767676" stroke-width="2.2" stroke-linejoin="round"/>
<rect x="870.8" y="1616.4" width="12" height="6" rx="3" fill="#b2b2b2" stroke="#1a1a1c" stroke-width="1.6"/>
<rect x="966.8" y="1616.4" width="12" height="6" rx="3" fill="#b2b2b2" stroke="#1a1a1c" stroke-width="1.6"/>
<circle cx="1052.5" cy="1273" r="11.8" fill="none" stroke="#6e6e6e" stroke-width="2"/><path d="M1053.1,1261.2 A11.8,11.8 0 0 1 1053.1,1284.8 Z" fill="#848484"/>
<path d="M1195.4,1266.3 A12.4,12.4 0 1 1 1194.6,1273.7" fill="none" stroke="#707070" stroke-width="2.2"/><path d="M1193.5,1259.3 V1267.3 H1201.5" fill="none" stroke="#707070" stroke-width="2.2"/>
<g clip-path="url(#wc5)"><path d="M1128.7,1338 L1158.7,1390.0 L1218.7,1338.0 L1158.7,1286.0 Z" fill="url(#wg5)"/><path d="M1128.7,1338 L1170.7,1338.0" stroke="#fff" stroke-width="2.2"/><path d="M1128.7,1338 L1149.7,1301.6" stroke="#fff" stroke-width="1.5" opacity="0.62"/><path d="M1128.7,1338 L1107.7,1301.6" stroke="#fff" stroke-width="1.3" opacity="0.3"/><path d="M1128.7,1338 L1086.7,1338.0" stroke="#fff" stroke-width="1.3" opacity="0.3"/><path d="M1128.7,1338 L1107.7,1374.4" stroke="#fff" stroke-width="1.3" opacity="0.3"/><path d="M1128.7,1338 L1149.7,1374.4" stroke="#fff" stroke-width="1.5" opacity="0.62"/></g>
<rect x="1125.0" y="1429.7" width="10" height="5" rx="2.5" fill="#fff"/>
<rect x="1124.0" y="1492.6" width="13" height="7.2" rx="3.6" fill="#0a0a0b"/>
<rect x="1125.6" y="1493.7" width="10" height="5" rx="2.5" fill="#fff"/>
<rect x="1068.5" y="1512" width="4" height="4" fill="#6a6a6a"/>
<rect x="1074.5" y="1512" width="4" height="4" fill="#666"/>
<rect x="1080.5" y="1512" width="4" height="4" fill="#5a5a5a"/>
<rect x="1086.5" y="1512" width="4" height="4" fill="#48484a"/>
<rect x="1092.5" y="1512" width="4" height="4" fill="#36363a"/>
<rect x="1068.5" y="1518" width="4" height="4" fill="#6a6a6a"/>
<rect x="1074.5" y="1518" width="4" height="4" fill="#666"/>
<rect x="1080.5" y="1518" width="4" height="4" fill="#5a5a5a"/>
<rect x="1086.5" y="1518" width="4" height="4" fill="#48484a"/>
<rect x="1092.5" y="1518" width="4" height="4" fill="#36363a"/>
<rect x="1068.5" y="1524" width="4" height="4" fill="#6a6a6a"/>
<rect x="1074.5" y="1524" width="4" height="4" fill="#666"/>
<rect x="1080.5" y="1524" width="4" height="4" fill="#5a5a5a"/>
<rect x="1086.5" y="1524" width="4" height="4" fill="#48484a"/>
<rect x="1092.5" y="1524" width="4" height="4" fill="#36363a"/>
<rect x="1068.5" y="1530" width="4" height="4" fill="#6a6a6a"/>
<rect x="1074.5" y="1530" width="4" height="4" fill="#666"/>
<rect x="1080.5" y="1530" width="4" height="4" fill="#5a5a5a"/>
<rect x="1086.5" y="1530" width="4" height="4" fill="#48484a"/>
<rect x="1092.5" y="1530" width="4" height="4" fill="#36363a"/>
<path d="M1178.3,1512 Q1189.1,1523 1189.1,1528 A10.8,9.8 0 0 1 1167.5,1528 Q1167.5,1523 1178.3,1512 Z" fill="none" stroke="#767676" stroke-width="2.2" stroke-linejoin="round"/>
<rect x="1076.5" y="1616.4" width="12" height="6" rx="3" fill="#b2b2b2" stroke="#1a1a1c" stroke-width="1.6"/>
<rect x="1172.5" y="1616.4" width="12" height="6" rx="3" fill="#b2b2b2" stroke="#1a1a1c" stroke-width="1.6"/>
<circle cx="1258.2" cy="1273" r="11.8" fill="none" stroke="#6e6e6e" stroke-width="2"/><path d="M1258.8,1261.2 A11.8,11.8 0 0 1 1258.8,1284.8 Z" fill="#848484"/>
<path d="M1401.1,1266.3 A12.4,12.4 0 1 1 1400.3,1273.7" fill="none" stroke="#707070" stroke-width="2.2"/><path d="M1399.2,1259.3 V1267.3 H1407.2" fill="none" stroke="#707070" stroke-width="2.2"/>
<g clip-path="url(#wc6)"><path d="M1334.4,1338 L1394.4,1338.0 L1379.4,1260.1 L1304.4,1286.0 Z" fill="url(#wg6)"/><path d="M1334.4,1338 L1376.4,1338.0" stroke="#fff" stroke-width="1.5" opacity="0.62"/><path d="M1334.4,1338 L1355.4,1301.6" stroke="#fff" stroke-width="2.2"/><path d="M1334.4,1338 L1313.4,1301.6" stroke="#fff" stroke-width="1.5" opacity="0.62"/><path d="M1334.4,1338 L1292.4,1338.0" stroke="#fff" stroke-width="1.3" opacity="0.3"/><path d="M1334.4,1338 L1313.4,1374.4" stroke="#fff" stroke-width="1.3" opacity="0.3"/><path d="M1334.4,1338 L1355.4,1374.4" stroke="#fff" stroke-width="1.3" opacity="0.3"/></g>
<rect x="1330.7" y="1429.7" width="10" height="5" rx="2.5" fill="#fff"/>
<rect x="1329.7" y="1492.6" width="13" height="7.2" rx="3.6" fill="#0a0a0b"/>
<rect x="1331.3" y="1493.7" width="10" height="5" rx="2.5" fill="#fff"/>
<rect x="1274.2" y="1512" width="4" height="4" fill="#6a6a6a"/>
<rect x="1280.2" y="1512" width="4" height="4" fill="#666"/>
<rect x="1286.2" y="1512" width="4" height="4" fill="#5a5a5a"/>
<rect x="1292.2" y="1512" width="4" height="4" fill="#48484a"/>
<rect x="1298.2" y="1512" width="4" height="4" fill="#36363a"/>
<rect x="1274.2" y="1518" width="4" height="4" fill="#6a6a6a"/>
<rect x="1280.2" y="1518" width="4" height="4" fill="#666"/>
<rect x="1286.2" y="1518" width="4" height="4" fill="#5a5a5a"/>
<rect x="1292.2" y="1518" width="4" height="4" fill="#48484a"/>
<rect x="1298.2" y="1518" width="4" height="4" fill="#36363a"/>
<rect x="1274.2" y="1524" width="4" height="4" fill="#6a6a6a"/>
<rect x="1280.2" y="1524" width="4" height="4" fill="#666"/>
<rect x="1286.2" y="1524" width="4" height="4" fill="#5a5a5a"/>
<rect x="1292.2" y="1524" width="4" height="4" fill="#48484a"/>
<rect x="1298.2" y="1524" width="4" height="4" fill="#36363a"/>
<rect x="1274.2" y="1530" width="4" height="4" fill="#6a6a6a"/>
<rect x="1280.2" y="1530" width="4" height="4" fill="#666"/>
<rect x="1286.2" y="1530" width="4" height="4" fill="#5a5a5a"/>
<rect x="1292.2" y="1530" width="4" height="4" fill="#48484a"/>
<rect x="1298.2" y="1530" width="4" height="4" fill="#36363a"/>
<path d="M1384.0,1512 Q1394.8,1523 1394.8,1528 A10.8,9.8 0 0 1 1373.2,1528 Q1373.2,1523 1384.0,1512 Z" fill="none" stroke="#767676" stroke-width="2.2" stroke-linejoin="round"/>
<rect x="1282.2" y="1616.4" width="12" height="6" rx="3" fill="#b2b2b2" stroke="#1a1a1c" stroke-width="1.6"/>
<rect x="1378.2" y="1616.4" width="12" height="6" rx="3" fill="#b2b2b2" stroke="#1a1a1c" stroke-width="1.6"/>
<path d="M2492.5,1145.5 L2501.5,1155 L2510.5,1145.5" fill="none" stroke="#7c7c7c" stroke-width="2.6"/>
<rect x="2562" y="1146" width="220" height="6" rx="3" fill="#17171a"/><circle cx="2556.7" cy="1149" r="9.2" fill="#9a9a9a"/>
<rect x="2827.5" y="1133.5" width="33" height="29" rx="1.5" fill="none" stroke="#3e3e42" stroke-width="1.8"/><path d="M2852,1133.5 V1162.5" stroke="#3e3e42" stroke-width="1.8"/><path d="M2832,1148 H2846 M2840,1141.5 L2846.5,1148 L2840,1154.5" fill="none" stroke="#47474b" stroke-width="2"/>
<circle cx="1469" cy="1293" r="8" fill="#fff" stroke="#0a0a0b" stroke-width="2"/><path d="M1496.5,1291 V1287 Q1496.5,1281.5 1503,1281.5 Q1509.5,1281.5 1509.5,1287 V1291" fill="none" stroke="#454548" stroke-width="2.2"/><rect x="1491" y="1290" width="24" height="17" rx="3" fill="#454548"/><path d="M1537,1282.5 L1547.5,1293 L1537,1303.5 L1526.5,1293 Z" fill="#8c8c8c" stroke="#0a0a0b" stroke-width="1.8"/><path d="M1562,1284 L1572.5,1293 L1562,1302" fill="none" stroke="#6e6e6e" stroke-width="2.4"/>
<circle cx="1469" cy="1343" r="8" fill="#fff" stroke="#0a0a0b" stroke-width="2"/><path d="M1496.5,1341 V1337 Q1496.5,1331.5 1503,1331.5 Q1509.5,1331.5 1509.5,1337 V1341" fill="none" stroke="#454548" stroke-width="2.2"/><rect x="1491" y="1340" width="24" height="17" rx="3" fill="#454548"/><path d="M1537,1332.5 L1547.5,1343 L1537,1353.5 L1526.5,1343 Z" fill="#8c8c8c" stroke="#0a0a0b" stroke-width="1.8"/><path d="M1562,1334 L1572.5,1343 L1562,1352" fill="none" stroke="#6e6e6e" stroke-width="2.4"/>
<path d="M2214.5,1178.5 Q2214.5,1176 2217,1176 H2243 Q2245.5,1176 2245.5,1178.5 V1189 L2232,1203 H2228 L2214.5,1189 Z" fill="#e64b3d" stroke="#0d0d0e" stroke-width="1.6"/><rect x="2226.8" y="1196" width="6.4" height="518" fill="#e64b3d"/><rect x="2226.4" y="1204" width="1" height="510" fill="#0d0d0e" opacity="0.6"/><rect x="2232.6" y="1204" width="1" height="510" fill="#0d0d0e" opacity="0.6"/>
<g fill="#fff"><path d="M70,1768.6 C63.5,1764.5 61.2,1759.6 62,1756.6 C63,1752.2 66.5,1750.4 70,1750.4 C73.5,1750.4 77,1752.2 78,1756.6 C78.8,1759.6 76.5,1764.5 70,1768.6 Z" transform="rotate(0 70 1769.6)"/><path d="M70,1768.6 C63.5,1764.5 61.2,1759.6 62,1756.6 C63,1752.2 66.5,1750.4 70,1750.4 C73.5,1750.4 77,1752.2 78,1756.6 C78.8,1759.6 76.5,1764.5 70,1768.6 Z" transform="rotate(120 70 1769.6)"/><path d="M70,1768.6 C63.5,1764.5 61.2,1759.6 62,1756.6 C63,1752.2 66.5,1750.4 70,1750.4 C73.5,1750.4 77,1752.2 78,1756.6 C78.8,1759.6 76.5,1764.5 70,1768.6 Z" transform="rotate(240 70 1769.6)"/></g>
<path d="M708,1753.5 H736 M706,1757.5 H738" stroke="#58585b" stroke-width="1.6"/><rect x="705" y="1761" width="34" height="25" rx="2" fill="none" stroke="#7a7a7a" stroke-width="2"/><circle cx="713.5" cy="1768.5" r="2.6" fill="#7a7a7a"/><path d="M709,1782.5 L717,1775 L722.5,1779.5 L729,1772 L735.5,1779 V1782.5 Z" fill="#555558" stroke="#7a7a7a" stroke-width="1.4" stroke-linejoin="round"/>
<g transform="skewX(-12) translate(375 0)"><rect x="952" y="1756" width="34" height="24" rx="3" fill="#2a2a2d" stroke="#7a7a7a" stroke-width="2"/><g fill="#7a7a7a"><rect x="956" y="1759.5" width="3.6" height="3.6"/><rect x="956" y="1772.8" width="3.6" height="3.6"/><rect x="978.4" y="1759.5" width="3.6" height="3.6"/><rect x="978.4" y="1772.8" width="3.6" height="3.6"/></g></g><path d="M971.5,1749 L963,1787" stroke="#18181b" stroke-width="6"/><path d="M971.5,1749 L963,1787" stroke="#7a7a7a" stroke-width="2"/><g stroke="#7a7a7a" stroke-width="2" stroke-linecap="round"><path d="M939,1762 H953"/><path d="M935,1768 H952" stroke="#5c5c5f"/><path d="M941,1774 H951"/><path d="M937,1780 H949" stroke="#5c5c5f"/></g>
<g fill="#7a7a7a"><rect x="1180" y="1758" width="18" height="5.6" rx="2.6"/><rect x="1207" y="1758" width="14" height="5.6" rx="2.6"/><rect x="1186" y="1767.5" width="12" height="5.6" rx="2.6"/><rect x="1207" y="1767.5" width="18" height="5.6" rx="2.6"/><rect x="1182" y="1777" width="16" height="5.6" rx="2.6"/><rect x="1207" y="1777" width="12" height="5.6" rx="2.6"/><rect x="1201.4" y="1756" width="2.4" height="32"/><path d="M1198.5,1750.5 H1206.7 V1755 L1202.6,1758 L1198.5,1755 Z"/></g>
<g transform="rotate(28 1446 1770)"><rect x="1443" y="1752" width="7" height="34" rx="3.5" fill="none" stroke="#7a7a7a" stroke-width="2"/><path d="M1443,1761 H1450" stroke="#7a7a7a" stroke-width="2"/></g><path d="M1441.5,1751 V1759 M1437.5,1755 H1445.5" stroke="#8a8a8a" stroke-width="1.4"/><path d="M1432.5,1760.5 V1766.5 M1429.5,1763.5 H1435.5" stroke="#6a6a6a" stroke-width="1.2"/><path d="M1428,1772 Q1424,1776 1428,1781" fill="none" stroke="#4c4c4f" stroke-width="3"/>
<circle cx="1685.8" cy="1753.8" r="3.6" fill="#c44fc4"/>
<circle cx="1693.7" cy="1761.1" r="3.6" fill="#7a5fd8"/>
<circle cx="1694.2" cy="1771.8" r="3.6" fill="#4a7fd8"/>
<circle cx="1686.9" cy="1779.7" r="3.6" fill="#3fb84f"/>
<circle cx="1676.2" cy="1780.2" r="3.6" fill="#e8d83f"/>
<circle cx="1668.3" cy="1772.9" r="3.6" fill="#e8a03f"/>
<circle cx="1667.8" cy="1762.2" r="3.6" fill="#e84f4f"/>
<circle cx="1675.1" cy="1754.3" r="3.6" fill="#e84f9a"/>
<circle cx="1681" cy="1767" r="3.4" fill="#8a8a8a"/>
<g fill="#7a7a7a"><ellipse cx="1911.5" cy="1781.5" rx="6" ry="4.6" transform="rotate(-20 1911.5 1781.5)"/><ellipse cx="1930" cy="1777" rx="6" ry="4.6" transform="rotate(-20 1930 1777)"/><path d="M1915,1757.5 L1936,1752 V1777 H1933.2 V1759.8 L1917.8,1763.8 V1781.5 H1915 Z"/></g>
<g fill="none" stroke="#7a7a7a" stroke-width="2" stroke-linejoin="round"><path d="M2176,1751 Q2163,1753 2156,1766 L2153,1773.5 L2160.5,1781 L2168,1778 Q2179,1770 2176,1751 Z"/><circle cx="2167.5" cy="1763" r="3.2"/><path d="M2156,1766 L2148.5,1768.5 L2146,1776 L2153,1773.5 M2168,1778 L2166.5,1786 L2160,1788.5 L2160.5,1781"/></g><path d="M2152,1780 L2147,1787 L2154.5,1783.5 Z" fill="#7a7a7a"/>
<path d="M2713.1,1756 L2728.4,1772.3 H2724.3 V1782 H2716 V1772.4 H2710.2 V1782 H2702 V1772.3 H2697.6 Z" fill="#8c8c8c"/>
<g fill="#8c8c8c" stroke="#8c8c8c" stroke-width="1.2" stroke-linejoin="round"><path d="M2808,1754 L2808.9,1760 H2812.7 L2813.6,1754 Z" transform="rotate(0 2810.8 1769)"/><path d="M2808,1754 L2808.9,1760 H2812.7 L2813.6,1754 Z" transform="rotate(45 2810.8 1769)"/><path d="M2808,1754 L2808.9,1760 H2812.7 L2813.6,1754 Z" transform="rotate(90 2810.8 1769)"/><path d="M2808,1754 L2808.9,1760 H2812.7 L2813.6,1754 Z" transform="rotate(135 2810.8 1769)"/><path d="M2808,1754 L2808.9,1760 H2812.7 L2813.6,1754 Z" transform="rotate(180 2810.8 1769)"/><path d="M2808,1754 L2808.9,1760 H2812.7 L2813.6,1754 Z" transform="rotate(225 2810.8 1769)"/><path d="M2808,1754 L2808.9,1760 H2812.7 L2813.6,1754 Z" transform="rotate(270 2810.8 1769)"/><path d="M2808,1754 L2808.9,1760 H2812.7 L2813.6,1754 Z" transform="rotate(315 2810.8 1769)"/></g><circle cx="2810.8" cy="1769" r="8.7" fill="none" stroke="#8c8c8c" stroke-width="5"/>
</svg>
</body></html>
